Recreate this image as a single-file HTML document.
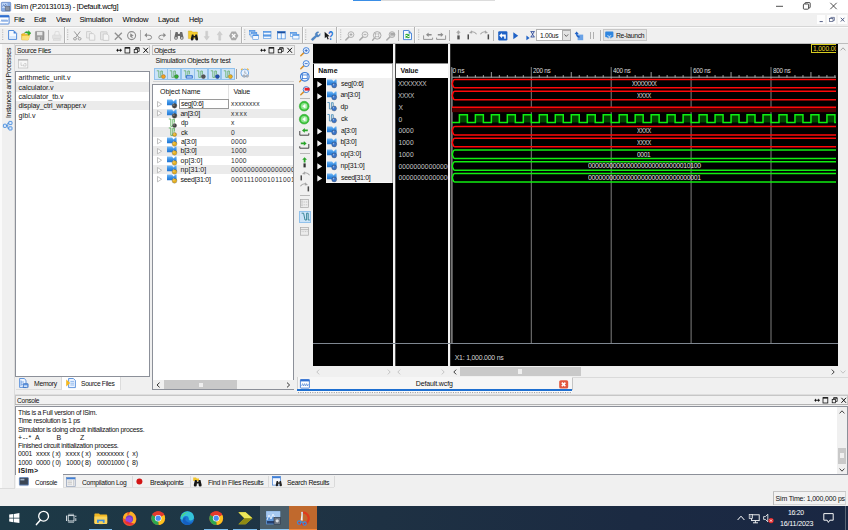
<!DOCTYPE html>
<html lang="en"><head><meta charset="utf-8"><title>ISim (P.20131013) - [Default.wcfg]</title>
<style>
html,body{margin:0;padding:0;background:#f0f0f0;}
#r{position:relative;width:848px;height:530px;overflow:hidden;background:#f0f0f0;font-family:"Liberation Sans",sans-serif;}
#r div,#r svg,#r span{position:absolute;}
#r svg{overflow:visible;}
.t{white-space:pre;line-height:1;}
</style></head>
<body><div id="r">
<svg width="0" height="0" style="left:0;top:0"><defs><linearGradient id="bg1" x1="0" y1="0" x2="0" y2="1"><stop offset="0" stop-color="#78baf4"/><stop offset="0.45" stop-color="#3f95e8"/><stop offset="1" stop-color="#1f74d2"/></linearGradient></defs></svg>
<div style="left:0px;top:0px;width:848px;height:13px;background:#ffffff;"></div>
<div style="left:353.4px;top:0px;width:28px;height:0.7px;background:#3a8ee6;"></div>
<div style="left:381.4px;top:0px;width:113.6px;height:0.6px;background:#dcdcdc;"></div>
<svg style="left:1px;top:1.5px;" width="10" height="10" viewBox="0 0 10 10">
<rect x="0.3" y="0.3" width="9.4" height="9" rx="0.8" fill="#86abe4" stroke="#5479b8" stroke-width="0.6"/>
<rect x="1.2" y="1.3" width="5.2" height="4.6" fill="#cfe2fa"/>
<rect x="4.2" y="4.3" width="4.6" height="4.2" fill="#8c95a4" stroke="#555f70" stroke-width="0.5"/>
<path d="M1.6 4.8 L2.6 2.6 L3.6 4.4 L4.6 2.2 L5.8 3.8" fill="none" stroke="#2c58a8" stroke-width="0.6"/>
</svg>
<span class="t" style="left:13.6px;top:3.30px;font-size:7.9px;color:#000;letter-spacing:-0.300px;transform-origin:0 0;transform:scaleX(0.9530);">ISim (P.20131013) - [Default.wcfg]</span>
<svg style="left:770px;top:0px;" width="78" height="13" viewBox="0 0 78 13">
<path d="M6 6.3 H13" stroke="#222" stroke-width="0.8" fill="none"/>
<rect x="33.4" y="4" width="5.2" height="5.2" rx="0.8" fill="none" stroke="#222" stroke-width="0.8"/>
<path d="M35 4 V3.2 Q35 2.6 35.6 2.6 H39.6 Q40.2 2.6 40.2 3.2 V7.2 Q40.2 7.8 39.6 7.8 H38.8" fill="none" stroke="#222" stroke-width="0.8"/>
<path d="M60.3 2.8 L66.7 9.2 M66.7 2.8 L60.3 9.2" stroke="#222" stroke-width="0.8" fill="none"/>
</svg>
<div style="left:0px;top:13px;width:848px;height:13.5px;background:#f0f0f0;"></div>
<svg style="left:0px;top:15px;" width="10" height="10" viewBox="0 0 10 10">
<rect x="-0.5" y="0.4" width="9.6" height="8.6" rx="0.8" fill="#fff" stroke="#2f6fd0" stroke-width="0.8"/>
<rect x="-0.5" y="0.4" width="9.6" height="2" fill="#2f6fd0"/>
<path d="M1 6.8 L2 4.6 L3 6.8 L4 4.6 L5 6.8 L6 4.6 L7 6.8 L8 4.6" fill="none" stroke="#2f6fd0" stroke-width="0.55"/>
</svg>
<span class="t" style="left:14.2px;top:16.30px;font-size:7.6px;color:#000;letter-spacing:-0.300px;transform-origin:0 0;transform:scaleX(0.9643);">File</span>
<span class="t" style="left:34.3px;top:16.30px;font-size:7.6px;color:#000;letter-spacing:-0.300px;transform-origin:0 0;transform:scaleX(0.9964);">Edit</span>
<span class="t" style="left:55.5px;top:16.30px;font-size:7.6px;color:#000;letter-spacing:-0.300px;transform-origin:0 0;transform:scaleX(0.9491);">View</span>
<span class="t" style="left:79.5px;top:16.30px;font-size:7.6px;color:#000;letter-spacing:-0.260px;">Simulation</span>
<span class="t" style="left:122.5px;top:16.30px;font-size:7.6px;color:#000;letter-spacing:-0.185px;">Window</span>
<span class="t" style="left:158px;top:16.30px;font-size:7.6px;color:#000;letter-spacing:-0.300px;transform-origin:0 0;transform:scaleX(0.9923);">Layout</span>
<span class="t" style="left:188.7px;top:16.30px;font-size:7.6px;color:#000;letter-spacing:-0.300px;transform-origin:0 0;transform:scaleX(0.9468);">Help</span>
<div style="left:816.5px;top:15px;width:8.6px;height:9.2px;background:#fdfdfd;"></div>
<div style="left:827.2px;top:15px;width:8.6px;height:9.2px;background:#fdfdfd;"></div>
<div style="left:838px;top:15px;width:8.6px;height:9.2px;background:#fdfdfd;"></div>
<svg style="left:816.5px;top:15px;" width="32" height="9.2" viewBox="0 0 32 9.2">
<path d="M2.6 6.6 H5.8" stroke="#44507a" stroke-width="0.9"/>
<rect x="12.6" y="3.6" width="3.4" height="3" fill="none" stroke="#44507a" stroke-width="0.7"/>
<path d="M13.8 3.6 V2.4 H17.4 V5.4 H16" fill="none" stroke="#44507a" stroke-width="0.7"/>
<path d="M23.8 2.8 L27.4 6.6 M27.4 2.8 L23.8 6.6" stroke="#44507a" stroke-width="0.9"/>
</svg>
<div style="left:0px;top:26px;width:848px;height:0.8px;background:#d6d6d6;"></div>
<div style="left:0px;top:26.8px;width:848px;height:0.7px;background:#fbfbfb;"></div>
<div style="left:0px;top:43px;width:848px;height:1px;background:#bdbdbd;"></div>
<svg style="left:2.3px;top:29px;" width="2" height="12" viewBox="0 0 2 12"><path d="M0.7 0.5 V12" stroke="#b4b4b4" stroke-width="1.1" stroke-dasharray="1 1.35" fill="none"/></svg>
<svg style="left:67.3px;top:29px;" width="2" height="12" viewBox="0 0 2 12"><path d="M0.7 0.5 V12" stroke="#b4b4b4" stroke-width="1.1" stroke-dasharray="1 1.35" fill="none"/></svg>
<svg style="left:244px;top:29px;" width="2" height="12" viewBox="0 0 2 12"><path d="M0.7 0.5 V12" stroke="#b4b4b4" stroke-width="1.1" stroke-dasharray="1 1.35" fill="none"/></svg>
<svg style="left:305.3px;top:29px;" width="2" height="12" viewBox="0 0 2 12"><path d="M0.7 0.5 V12" stroke="#b4b4b4" stroke-width="1.1" stroke-dasharray="1 1.35" fill="none"/></svg>
<svg style="left:339.8px;top:29px;" width="2" height="12" viewBox="0 0 2 12"><path d="M0.7 0.5 V12" stroke="#b4b4b4" stroke-width="1.1" stroke-dasharray="1 1.35" fill="none"/></svg>
<svg style="left:417.8px;top:29px;" width="2" height="12" viewBox="0 0 2 12"><path d="M0.7 0.5 V12" stroke="#b4b4b4" stroke-width="1.1" stroke-dasharray="1 1.35" fill="none"/></svg>
<div style="left:64.3px;top:27px;width:0.8px;height:16px;background:#b4b4b4;"></div>
<div style="left:65.1px;top:27px;width:0.9px;height:16px;background:#fafafa;"></div>
<div style="left:241.3px;top:27px;width:0.8px;height:16px;background:#b4b4b4;"></div>
<div style="left:242.10000000000002px;top:27px;width:0.9px;height:16px;background:#fafafa;"></div>
<div style="left:302.3px;top:27px;width:0.8px;height:16px;background:#b4b4b4;"></div>
<div style="left:303.1px;top:27px;width:0.9px;height:16px;background:#fafafa;"></div>
<div style="left:336.3px;top:27px;width:0.8px;height:16px;background:#b4b4b4;"></div>
<div style="left:337.1px;top:27px;width:0.9px;height:16px;background:#fafafa;"></div>
<div style="left:414.3px;top:27px;width:0.8px;height:16px;background:#b4b4b4;"></div>
<div style="left:415.1px;top:27px;width:0.9px;height:16px;background:#fafafa;"></div>
<div style="left:47.6px;top:29.5px;width:0.9px;height:11.5px;background:#b4b4b4;"></div>
<div style="left:140px;top:29.5px;width:0.9px;height:11.5px;background:#b4b4b4;"></div>
<div style="left:170.4px;top:29.5px;width:0.9px;height:11.5px;background:#b4b4b4;"></div>
<div style="left:398.4px;top:29.5px;width:0.9px;height:11.5px;background:#b4b4b4;"></div>
<div style="left:449.4px;top:29.5px;width:0.9px;height:11.5px;background:#b4b4b4;"></div>
<div style="left:493px;top:29.5px;width:0.9px;height:11.5px;background:#b4b4b4;"></div>
<div style="left:600.3px;top:29.5px;width:0.9px;height:11.5px;background:#b4b4b4;"></div>
<svg style="left:8px;top:30.3px;" width="10" height="10" viewBox="0 0 10 10"><path d="M0.6 0.5 H5.8 L8.6 3.3 V9.4 H0.6 Z" fill="#f4f9ff" stroke="#3f7fd6" stroke-width="0.9" stroke-linejoin="round"/>
<path d="M5.6 0.6 V3.5 H8.5 Z" fill="#3f7fd6"/><path d="M1.4 6 L7.8 6 7.8 8.8 1.4 8.8Z" fill="#cfe3fb" opacity="0.8"/></svg>
<svg style="left:21px;top:29.8px;" width="10.5" height="10.5" viewBox="0 0 10.5 10.5"><path d="M0.6 4 L3.6 3.4 L4.6 4.4 L8.8 4.6 L7.2 10 L0.8 9.8 Z" fill="#f2c02c" stroke="#c99712" stroke-width="0.5"/>
<path d="M1.2 6 L9.4 5.4 L7.4 10 L0.9 9.8 Z" fill="#fbe07a"/>
<path d="M3.4 2.8 Q5.6 0.6 7.4 2 L7.4 0.6 L10 3.2 L7.2 5.4 L7.3 3.8 Q5.4 2.6 3.4 2.8 Z" fill="#2fb12f" stroke="#1a861a" stroke-width="0.3"/></svg>
<svg style="left:35px;top:31px;" width="9.5" height="9.5" viewBox="0 0 9.5 9.5"><rect x="0.4" y="0.4" width="8.6" height="8.6" rx="0.6" fill="#9c9c9c" stroke="#8c8c8c" stroke-width="0.6"/>
<rect x="2" y="0.9" width="5.4" height="3.4" fill="#e6e6e6"/><rect x="2.6" y="5.8" width="4.2" height="3.2" fill="#c9c9c9"/><rect x="5.2" y="6.2" width="1.1" height="2.4" fill="#7d7d7d"/></svg>
<svg style="left:52px;top:30.8px;" width="10" height="10" viewBox="0 0 10 10"><path d="M2.6 4 L3.4 0.6 H6.8 L7.4 4" fill="#f2f2f2" stroke="#cfcfcf" stroke-width="0.6"/>
<rect x="0.5" y="4" width="8.6" height="3.8" rx="0.8" fill="#e2e2e2" stroke="#d2d2d2" stroke-width="0.5"/>
<path d="M1.8 7.8 H8 L8.6 9.4 H1.2 Z" fill="#e6e6e6" stroke="#cdcdcd" stroke-width="0.5"/></svg>
<svg style="left:73px;top:31px;" width="9" height="10" viewBox="0 0 9 10"><path d="M1.2 0.4 L6 6.6 M7.2 0.4 L2.6 6.6" stroke="#8e8e8e" stroke-width="0.9" fill="none"/>
<ellipse cx="2" cy="7.8" rx="1.5" ry="1.2" fill="none" stroke="#8e8e8e" stroke-width="0.8"/><ellipse cx="6.6" cy="7.8" rx="1.5" ry="1.2" fill="none" stroke="#8e8e8e" stroke-width="0.8"/></svg>
<svg style="left:86px;top:31px;" width="10" height="10" viewBox="0 0 10 10"><path d="M0.6 0.6 H4.4 L6 2.2 V7 H0.6 Z" fill="#ededed" stroke="#c2c2c2" stroke-width="0.7"/>
<path d="M3.4 2.6 H7.2 L8.8 4.2 V9.2 H3.4 Z" fill="#f3f3f3" stroke="#c2c2c2" stroke-width="0.7"/></svg>
<svg style="left:100px;top:31px;" width="10" height="10" viewBox="0 0 10 10"><rect x="0.5" y="0.8" width="6.6" height="8" rx="0.6" fill="#e6e6e6" stroke="#c4c4c4" stroke-width="0.7"/>
<path d="M3.2 3 H7 L8.8 4.6 V9.4 H3.2 Z" fill="#f5f5f5" stroke="#c2c2c2" stroke-width="0.7"/></svg>
<svg style="left:113.5px;top:31.6px;" width="9" height="9" viewBox="0 0 9 9"><path d="M0.8 0.8 L7.8 7.8 M7.8 0.8 L0.8 7.8" stroke="#909090" stroke-width="1.3" fill="none"/></svg>
<svg style="left:127px;top:31px;" width="10" height="10" viewBox="0 0 10 10"><circle cx="4.6" cy="4.6" r="4" fill="#f0f0f0" stroke="#8e8e8e" stroke-width="1.1"/>
<path d="M3.4 2.2 L6.8 4.8 L5 5 L5.8 7 L4.8 7.3 L4 5.4 L3 6.2 Z" fill="#8a8a8a"/></svg>
<svg style="left:144px;top:31.5px;" width="9" height="8" viewBox="0 0 9 8"><path d="M1.2 3.2 H5 Q7.6 3.2 7.6 5.4 Q7.6 7.4 5 7.4 H3.6" fill="none" stroke="#8c8c8c" stroke-width="1"/><path d="M0.4 3.2 L3 0.8 V5.6 Z" fill="#8c8c8c"/></svg>
<svg style="left:158px;top:31.5px;" width="9" height="8" viewBox="0 0 9 8"><path d="M7.2 3.2 H3.4 Q0.8 3.2 0.8 5.4 Q0.8 7.4 3.4 7.4 H4.8" fill="none" stroke="#8c8c8c" stroke-width="1"/><path d="M8 3.2 L5.4 0.8 V5.6 Z" fill="#8c8c8c"/></svg>
<svg style="left:174px;top:31px;" width="10" height="10" viewBox="0 0 10 10"><path d="M1.6 1 H3.6 L4.2 3 H5.6 L6.2 1 H8.2 L9.6 6.8 Q9.8 8.8 7.8 8.8 Q6 8.8 6 7 V5 H3.8 V7 Q3.8 8.8 2 8.8 Q0 8.8 0.2 6.8 Z" fill="#6a6a6a"/><circle cx="2" cy="7" r="0.9" fill="#d0d0d0"/><circle cx="7.8" cy="7" r="0.9" fill="#d0d0d0"/></svg>
<svg style="left:188px;top:30px;" width="11" height="11" viewBox="0 0 11 11"><path d="M0.4 1 H3.6 L4.6 2 H9.4 V8.6 H0.4 Z" fill="#f6cd2f" stroke="#d0a010" stroke-width="0.4"/>
<g transform="translate(2.6,3.6) scale(0.78)"><path d="M1.6 1 H3.6 L4.2 3 H5.6 L6.2 1 H8.2 L9.6 6.8 Q9.8 8.8 7.8 8.8 Q6 8.8 6 7 V5 H3.8 V7 Q3.8 8.8 2 8.8 Q0 8.8 0.2 6.8 Z" fill="#1c1c1c"/></g></svg>
<svg style="left:203.5px;top:31px;" width="5.4" height="9.5" viewBox="0 0 5.4 9.5"><path d="M1.7 0.2 H3.7 V5.6 H5.3 L2.7 9.2 L0.1 5.6 H1.7 Z" fill="#cfcfcf" stroke="#bcbcbc" stroke-width="0.3"/></svg>
<svg style="left:217px;top:31px;" width="5.4" height="9.5" viewBox="0 0 5.4 9.5"><path d="M1.7 9.2 H3.7 V3.8 H5.3 L2.7 0.2 L0.1 3.8 H1.7 Z" fill="#cfcfcf" stroke="#bcbcbc" stroke-width="0.3"/></svg>
<svg style="left:228.5px;top:30.5px;" width="10" height="10" viewBox="0 0 10 10"><path d="M2.6 0.4 H6.8 L9.4 4.8 L6.8 9.2 H2.6 L0.1 4.8 Z" fill="#a9a9a9"/><path d="M3 3 L6.4 6.6 M6.4 3 L3 6.6" stroke="#fff" stroke-width="1.2"/></svg>
<svg style="left:249px;top:30.3px;" width="10.5" height="10.5" viewBox="0 0 10.5 10.5"><rect x="0.4" y="0.5" width="5.6" height="4.4" fill="#f2f8ff" stroke="#3b86de" stroke-width="0.55"/><rect x="0.4" y="0.5" width="5.6" height="1.1" fill="#3b86de"/><rect x="2" y="2.6" width="5.8" height="4.4" fill="#f2f8ff" stroke="#3b86de" stroke-width="0.55"/><rect x="2" y="2.6" width="5.8" height="1.1" fill="#3b86de"/><rect x="3.8" y="4.8" width="5.8" height="4.6" fill="#f2f8ff" stroke="#3b86de" stroke-width="0.55"/><rect x="3.8" y="4.8" width="5.8" height="1.1" fill="#3b86de"/></svg>
<svg style="left:263.3px;top:31.2px;" width="9" height="8.5" viewBox="0 0 9 8.5"><rect x="0.4" y="0.5" width="7.6" height="3.3" fill="#f2f8ff" stroke="#3b86de" stroke-width="0.55"/><rect x="0.4" y="0.5" width="7.6" height="1.1" fill="#3b86de"/><rect x="0.4" y="4.4" width="7.6" height="3.3" fill="#f2f8ff" stroke="#3b86de" stroke-width="0.55"/><rect x="0.4" y="4.4" width="7.6" height="1.1" fill="#3b86de"/></svg>
<svg style="left:277px;top:31.2px;" width="9" height="8.5" viewBox="0 0 9 8.5"><rect x="0.4" y="0.5" width="7.8" height="7.4" fill="#f2f8ff" stroke="#3b86de" stroke-width="0.7"/><rect x="0.4" y="0.5" width="7.8" height="1.8" fill="#1d4f9e"/><path d="M4.3 2 V8" stroke="#3b86de" stroke-width="0.7"/></svg>
<svg style="left:290px;top:31.6px;" width="10" height="8" viewBox="0 0 10 8"><rect x="0.4" y="0.5" width="6.2" height="4.2" fill="#f2f8ff" stroke="#3b86de" stroke-width="0.55"/><rect x="0.4" y="0.5" width="6.2" height="1.1" fill="#3b86de"/><rect x="2.8" y="2.6" width="6.2" height="4.4" fill="#f2f8ff" stroke="#3b86de" stroke-width="0.55"/><rect x="2.8" y="2.6" width="6.2" height="1.1" fill="#3b86de"/></svg>
<svg style="left:310.5px;top:30.8px;" width="10" height="10" viewBox="0 0 10 10"><path d="M9.2 2.6 Q9.6 4.6 8 5.6 Q6.8 6.2 5.8 5.8 L2.2 9.2 Q1.2 9.8 0.6 9 Q0 8.2 0.8 7.6 L4.4 4.4 Q3.8 2.6 5.2 1.4 Q6.4 0.4 8 1 L6.2 2.6 L6.6 3.8 L7.8 4.2 Z" fill="#4c86c8" stroke="#2d5f9e" stroke-width="0.3"/></svg>
<svg style="left:323.5px;top:30.8px;" width="11" height="10" viewBox="0 0 11 10"><path d="M0.6 0.8 L0.8 7.2 L2.4 5.8 L3.6 8.6 L4.8 8.1 L3.6 5.4 L5.6 5.2 Z" fill="#1a1a1a"/></svg>
<span class="t" style="left:328.0px;top:29.80px;font-size:12.2px;color:#1e6fd6;font-weight:bold;transform-origin:0 0;transform:scaleX(0.7200);">?</span>
<svg style="left:345px;top:31px;" width="10" height="10" viewBox="0 0 10 10"><path d="M4.2 5.6 L0.8 9" stroke="#a9a9a9" stroke-width="1.5" stroke-linecap="round"/><circle cx="6" cy="3.6" r="2.9" fill="#ececec" stroke="#a3a3a3" stroke-width="0.8"/><path d="M4.6 3.6 H7.4 M6 2.2 V5" stroke="#9a9a9a" stroke-width="0.7"/></svg>
<svg style="left:358.5px;top:31px;" width="10" height="10" viewBox="0 0 10 10"><path d="M4.2 5.6 L0.8 9" stroke="#a9a9a9" stroke-width="1.5" stroke-linecap="round"/><circle cx="6" cy="3.6" r="2.9" fill="#ececec" stroke="#a3a3a3" stroke-width="0.8"/><path d="M4.6 3.6 H7.4" stroke="#9a9a9a" stroke-width="0.7"/></svg>
<svg style="left:372px;top:30.6px;" width="10" height="10" viewBox="0 0 10 10"><path d="M2.8 6.6 L0.6 9.2" stroke="#a9a9a9" stroke-width="1.4" stroke-linecap="round"/><circle cx="5.2" cy="4.4" r="3.8" fill="#ececec" stroke="#a3a3a3" stroke-width="0.9"/><path d="M2.6 1.8 L7.8 7 M7.8 1.8 L2.6 7" stroke="#a3a3a3" stroke-width="0.8"/><rect x="3.6" y="3" width="3.2" height="2.8" fill="#f4f4f4" stroke="#a3a3a3" stroke-width="0.5"/></svg>
<svg style="left:385.5px;top:31px;" width="10" height="10" viewBox="0 0 10 10"><path d="M4.2 5.6 L0.8 9" stroke="#a9a9a9" stroke-width="1.5" stroke-linecap="round"/><circle cx="6" cy="3.6" r="2.9" fill="#dcdcdc" stroke="#a3a3a3" stroke-width="0.8"/><rect x="4.4" y="2" width="4.6" height="2.6" fill="#a9a9a9"/></svg>
<svg style="left:402.8px;top:30.3px;" width="9.5" height="10.5" viewBox="0 0 9.5 10.5"><path d="M0.5 0.5 H5.8 L8.5 3.2 V9.6 H0.5 Z" fill="#f6faff" stroke="#3f7fd6" stroke-width="0.9" stroke-linejoin="round"/><path d="M5.6 0.6 V3.4 H8.4 Z" fill="#3f7fd6"/>
<path d="M2 5 Q3.6 3 5.6 4.4 L6.4 3.6 V6 H4 L4.9 5.1 Q3.6 4.4 2.8 5.6 Z" fill="#27a527"/><path d="M7 7 Q5.4 9 3.4 7.6 L2.6 8.4 V6 H5 L4.1 6.9 Q5.4 7.6 6.2 6.4 Z" fill="#27a527"/></svg>
<svg style="left:423px;top:31.6px;" width="11" height="9" viewBox="0 0 11 9"><path d="M0.6 3.4 V7.4 H9.6 V5.6" fill="none" stroke="#8c8c8c" stroke-width="0.9"/><path d="M3 2.8 L5.6 0.6 V2 H8.6 V3.6 H5.6 V5 Z" fill="#8c8c8c"/></svg>
<svg style="left:436px;top:31.6px;" width="11" height="9" viewBox="0 0 11 9"><path d="M0.6 5.6 V7.4 H9.6 V3.4" fill="none" stroke="#8c8c8c" stroke-width="0.9"/><path d="M7.4 2.8 L4.8 0.6 V2 H1.8 V3.6 H4.8 V5 Z" fill="#8c8c8c"/></svg>
<svg style="left:455.6px;top:30.4px;" width="5" height="11" viewBox="0 0 5 11"><path d="M2.4 0.2 L4.7 2.8 H3.3 V4.6 H1.5 V2.8 H0.1 Z" fill="#a8a8a8"/><rect x="1.3" y="5.4" width="2.4" height="4" fill="#555"/></svg>
<svg style="left:467px;top:30.4px;" width="11" height="10" viewBox="0 0 11 10"><path d="M9.6 4.2 Q7.6 1.2 4.2 1.8" fill="none" stroke="#a6a6a6" stroke-width="1.1"/><path d="M2 3 L5 0.2 L5.2 3.6 Z" fill="#a6a6a6"/><rect x="0.5" y="4.4" width="1.5" height="5" fill="#4a4a4a"/></svg>
<svg style="left:480.3px;top:30.4px;" width="11" height="10" viewBox="0 0 11 10"><path d="M0.4 4.2 Q2.4 1.2 5.8 1.8" fill="none" stroke="#a6a6a6" stroke-width="1.1"/><path d="M8 3 L5 0.2 L4.8 3.6 Z" fill="#a6a6a6"/><rect x="7.6" y="4.4" width="1.5" height="5" fill="#4a4a4a"/></svg>
<svg style="left:498px;top:30.8px;" width="10" height="10" viewBox="0 0 10 10"><rect x="0.2" y="0.2" width="9.2" height="9.2" rx="1.2" fill="#1f62c6"/><path d="M1.2 4.6 L4 2 V3.6 H7.8 V7.8 H6.2 V5.6 H4 V7.2 Z" fill="#fff"/></svg>
<svg style="left:513.4px;top:31.8px;" width="6" height="8" viewBox="0 0 6 8"><path d="M0.3 0.2 L5.2 3.7 L0.3 7.2 Z" fill="#1f62c6"/></svg>
<svg style="left:525.5px;top:30.6px;" width="10" height="10" viewBox="0 0 10 10"><path d="M0.4 4.6 L3.6 6.9 L0.4 9.2 Z" fill="#1f62c6"/><path d="M4.6 0.6 H8.6 M4.6 6 H8.6 M5 0.6 L8.2 6 M8.2 0.6 L5 6" stroke="#1f3f96" stroke-width="0.8" fill="none"/></svg>
<div style="left:536.3px;top:29.3px;width:35px;height:12px;background:#fff;border:0.8px solid #b2b2b2;box-sizing:border-box;"></div>
<div style="left:562px;top:30px;width:8.6px;height:10.6px;background:#e4e4e4;border:0.6px solid #adadad;box-sizing:border-box;"></div>
<svg style="left:562px;top:30px;" width="8.6" height="10.6" viewBox="0 0 8.6 10.6"><path d="M2.4 4.4 L4.3 6.4 L6.2 4.4" fill="none" stroke="#444" stroke-width="0.8"/></svg>
<span class="t" style="left:540px;top:32.20px;font-size:7.0px;color:#111;letter-spacing:-0.300px;transform-origin:0 0;transform:scaleX(0.9545);">1.00us</span>
<svg style="left:574px;top:31px;" width="10" height="10" viewBox="0 0 10 10"><rect x="3.6" y="3.6" width="5.6" height="5.6" fill="#6aa2e6"/><path d="M2.6 0.4 L0.6 3 L2 3.2 Q2.2 6.6 5.6 6.8 V5.2 Q3.6 5.2 3.4 3.2 L4.8 3 Z" fill="#1f62c6"/></svg>
<div style="left:590px;top:32px;width:1.3px;height:7.4px;background:#b0b0b0;"></div>
<div style="left:593px;top:32px;width:1.3px;height:7.4px;background:#b0b0b0;"></div>
<div style="left:603.3px;top:29px;width:43.4px;height:12.4px;background:#e6e6e6;border:0.8px solid #c8c8c8;box-sizing:border-box;"></div>
<svg style="left:605.3px;top:31.2px;" width="9" height="8.5" viewBox="0 0 9 8.5"><path d="M1 0.6 H7.6 Q8.4 0.6 8.4 1.4 V5.4 Q8.4 6.2 7.6 6.2 H6.8 L5.8 7.8 L5.4 6.2 H3.6 L3.2 7.8 L2.2 6.2 H1 Q0.2 6.2 0.2 5.4 V1.4 Q0.2 0.6 1 0.6Z" fill="#2f86e0"/><path d="M2.4 4.6 Q4.4 6.4 6.2 4.6" stroke="#fff" stroke-width="0.8" fill="none"/></svg>
<span class="t" style="left:615.5px;top:32.00px;font-size:7.0px;color:#111;letter-spacing:-0.300px;transform-origin:0 0;transform:scaleX(0.9703);">Re-launch</span>
<div style="left:0px;top:44px;width:1.6px;height:444px;background:#fafafa;"></div>
<div style="left:14.4px;top:44px;width:0.8px;height:444px;background:#dcdcdc;"></div>
<div style="left:0px;top:488px;width:15px;height:0.8px;background:#dcdcdc;"></div>
<span class="t" style="left:5.07px;top:118.2px;font-size:7.0px;color:#111;transform-origin:0 0;transform:rotate(-90deg) scaleX(0.9822);letter-spacing:-0.300px;">Instances and Processes</span>
<svg style="left:2.6px;top:120.6px;" width="10" height="10" viewBox="0 0 10 10"><rect x="0.4" y="3.2" width="3" height="3.2" rx="0.6" fill="#dcecff" stroke="#2d7cd8" stroke-width="0.8"/>
<rect x="5.8" y="0.4" width="3.2" height="3.2" rx="0.6" fill="#dcecff" stroke="#2d7cd8" stroke-width="0.8"/>
<rect x="5.8" y="5.8" width="3.2" height="3.2" rx="0.6" fill="#dcecff" stroke="#2d7cd8" stroke-width="0.8"/>
<path d="M3.4 4.8 H4.8 M4.8 2 V7.4 M4.8 2 H5.8 M4.8 7.4 H5.8" stroke="#2d7cd8" stroke-width="0.7" fill="none"/></svg>
<div style="left:15px;top:44.6px;width:135.2px;height:10.6px;background:#f1f1f1;border:0.8px solid #c6c6c6;box-sizing:border-box;"></div>
<div style="left:15px;top:54.400000000000006px;width:135.2px;height:0.8px;background:#b9b9b9;"></div>
<span class="t" style="left:17px;top:46.80px;font-size:7.0px;color:#111;letter-spacing:-0.300px;transform-origin:0 0;transform:scaleX(0.9589);">Source Files</span>
<svg style="left:115.99999999999999px;top:46.800000000000004px;" width="34" height="7" viewBox="0 0 34 7"><path d="M0.2 3.2 L2 1.4 V2.7 H4.2 V1.4 L6 3.2 L4.2 5 V3.7 H2 V5 Z" fill="#111"/>
<rect x="9" y="0.6" width="4.8" height="5.4" fill="none" stroke="#111" stroke-width="0.8"/><path d="M9 1 H13.8" stroke="#111" stroke-width="1.2"/>
<rect x="18.2" y="2.4" width="3.4" height="3.4" fill="none" stroke="#111" stroke-width="0.75"/><path d="M19.6 2.2 V0.8 H23.2 V4.4 H21.8" fill="none" stroke="#111" stroke-width="0.75"/><path d="M19.6 1 H23.2" stroke="#111" stroke-width="1"/>
<path d="M27.4 0.8 L32 5.8 M32 0.8 L27.4 5.8" stroke="#111" stroke-width="1"/></svg>
<svg style="left:18px;top:59px;" width="10.5" height="10" viewBox="0 0 10.5 10"><rect x="0.4" y="0.6" width="9.4" height="8.4" fill="#f7f7f7" stroke="#bdbdbd" stroke-width="0.7"/><path d="M0.4 1 H9.8" stroke="#a8a8a8" stroke-width="1"/>
<path d="M3 3.4 V6.4 H4.6 M5.4 5.8 Q6.4 4.2 8 4.6 V7 H5.4 Z" fill="none" stroke="#b9b9b9" stroke-width="0.6"/></svg>
<div style="left:15px;top:71.4px;width:135px;height:305.4px;background:#fff;border:0.9px solid #8c9099;box-sizing:border-box;"></div>
<span class="t" style="left:18.5px;top:75.25px;font-size:7.1px;color:#151515;letter-spacing:0.021px;">arithmetic_unit.v</span>
<div style="left:16px;top:82.47px;width:133px;height:9.3px;background:#ebebeb;"></div>
<span class="t" style="left:18.5px;top:84.57px;font-size:7.1px;color:#151515;letter-spacing:-0.043px;">calculator.v</span>
<span class="t" style="left:18.5px;top:93.89px;font-size:7.1px;color:#151515;letter-spacing:-0.052px;">calculator_tb.v</span>
<div style="left:16px;top:101.11000000000001px;width:133px;height:9.3px;background:#ebebeb;"></div>
<span class="t" style="left:18.5px;top:103.21px;font-size:7.1px;color:#151515;letter-spacing:-0.125px;">display_ctrl_wrapper.v</span>
<span class="t" style="left:18.5px;top:112.53px;font-size:7.1px;color:#151515;letter-spacing:0.080px;">glbl.v</span>
<div style="left:15.6px;top:377px;width:46px;height:12.4px;background:#efefef;"></div>
<div style="left:61.4px;top:377px;width:0.7px;height:12.4px;background:#d9d9d9;"></div>
<div style="left:15.6px;top:389.2px;width:46px;height:0.7px;background:#dcdcdc;"></div>
<div style="left:62px;top:376.6px;width:58px;height:13px;background:#fff;"></div>
<div style="left:120px;top:377px;width:0.7px;height:12.6px;background:#dcdcdc;"></div>
<svg style="left:19px;top:378px;" width="10" height="10.5" viewBox="0 0 10 10.5"><path d="M0.6 0.5 H5.2 L7 2.3 V9.4 H0.6 Z" fill="#eef5ff" stroke="#3f7fd6" stroke-width="0.8"/><path d="M2 2.4 V8 M2 4 H5 M2 6.2 H5" stroke="#3f7fd6" stroke-width="0.6"/>
<rect x="4.2" y="5.6" width="5" height="4" rx="0.5" fill="#5e96e0" stroke="#2d62b4" stroke-width="0.5"/><rect x="5" y="7.4" width="3.2" height="1.4" fill="#e6f0ff"/></svg>
<span class="t" style="left:34px;top:380.10px;font-size:7.0px;color:#111;letter-spacing:-0.300px;transform-origin:0 0;transform:scaleX(0.9733);">Memory</span>
<svg style="left:66px;top:378px;" width="10.5" height="10.5" viewBox="0 0 10.5 10.5"><path d="M2.6 0.5 H7.4 L9.4 2.5 V9.6 H2.6 Z" fill="#eef5ff" stroke="#3f7fd6" stroke-width="0.8"/><path d="M4.4 3.4 H8 M4.4 5.2 H8 M4.4 7 H8" stroke="#6aa0e6" stroke-width="0.7"/>
<path d="M0.2 1.4 L4.2 5 L0.2 8.6 Z" fill="#f5b81f"/></svg>
<span class="t" style="left:81.4px;top:380.10px;font-size:7.0px;color:#111;letter-spacing:-0.300px;transform-origin:0 0;transform:scaleX(0.9476);">Source Files</span>
<div style="left:152.4px;top:44.6px;width:142.2px;height:10.6px;background:#f1f1f1;border:0.8px solid #c6c6c6;box-sizing:border-box;"></div>
<div style="left:152.4px;top:54.400000000000006px;width:142.2px;height:0.8px;background:#b9b9b9;"></div>
<span class="t" style="left:154.4px;top:46.80px;font-size:7.0px;color:#111;letter-spacing:-0.300px;transform-origin:0 0;transform:scaleX(0.9869);">Objects</span>
<svg style="left:260.40000000000003px;top:46.800000000000004px;" width="34" height="7" viewBox="0 0 34 7"><path d="M0.2 3.2 L2 1.4 V2.7 H4.2 V1.4 L6 3.2 L4.2 5 V3.7 H2 V5 Z" fill="#111"/>
<rect x="9" y="0.6" width="4.8" height="5.4" fill="none" stroke="#111" stroke-width="0.8"/><path d="M9 1 H13.8" stroke="#111" stroke-width="1.2"/>
<rect x="18.2" y="2.4" width="3.4" height="3.4" fill="none" stroke="#111" stroke-width="0.75"/><path d="M19.6 2.2 V0.8 H23.2 V4.4 H21.8" fill="none" stroke="#111" stroke-width="0.75"/><path d="M19.6 1 H23.2" stroke="#111" stroke-width="1"/>
<path d="M27.4 0.8 L32 5.8 M32 0.8 L27.4 5.8" stroke="#111" stroke-width="1"/></svg>
<span class="t" style="left:155.5px;top:57.10px;font-size:7.0px;color:#111;letter-spacing:-0.253px;">Simulation Objects for test</span>
<div style="left:153px;top:81px;width:141.4px;height:0.7px;background:#d2d2d2;"></div>
<div style="left:154.0px;top:67.8px;width:13.82px;height:11.8px;background:#cbe3f8;border:0.6px solid #92c2ec;box-sizing:border-box;"></div>
<svg style="left:156.0px;top:68.6px;" width="10" height="10.5" viewBox="0 0 10 10.5"><path d="M0.8 1.8 H2.8 V8.4 H4.8 V2 H6.4 V5.4" fill="none" stroke="#55a655" stroke-width="0.7"/><circle cx="7.4" cy="7.6" r="2.1" fill="#f0a020" stroke="#333" stroke-width="0.25"/></svg>
<div style="left:167.42px;top:67.8px;width:13.82px;height:11.8px;background:#cbe3f8;border:0.6px solid #92c2ec;box-sizing:border-box;"></div>
<svg style="left:169.42px;top:68.6px;" width="10" height="10.5" viewBox="0 0 10 10.5"><path d="M0.8 1.8 H2.8 V8.4 H4.8 V2 H6.4 V5.4" fill="none" stroke="#55a655" stroke-width="0.7"/><circle cx="7.4" cy="7.6" r="2.1" fill="#33aa33" stroke="#333" stroke-width="0.25"/></svg>
<div style="left:180.84px;top:67.8px;width:13.82px;height:11.8px;background:#cbe3f8;border:0.6px solid #92c2ec;box-sizing:border-box;"></div>
<svg style="left:182.84px;top:68.6px;" width="10" height="10.5" viewBox="0 0 10 10.5"><path d="M0.8 1.8 H2.8 V8.4 H4.8 V2 H6.4 V5.4" fill="none" stroke="#55a655" stroke-width="0.7"/><rect x="2.8" y="6.2" width="7" height="3.4" rx="0.6" fill="#2f6fd0"/><rect x="3.8" y="7.4" width="5" height="1.2" fill="#cfe0ff"/></svg>
<div style="left:194.26px;top:67.8px;width:13.82px;height:11.8px;background:#cbe3f8;border:0.6px solid #92c2ec;box-sizing:border-box;"></div>
<svg style="left:196.26px;top:68.6px;" width="10" height="10.5" viewBox="0 0 10 10.5"><path d="M0.8 1.8 H2.8 V8.4 H4.8 V2 H6.4 V5.4" fill="none" stroke="#55a655" stroke-width="0.7"/><circle cx="7.4" cy="7.6" r="2.1" fill="#555" stroke="#333" stroke-width="0.25"/></svg>
<div style="left:207.68px;top:67.8px;width:13.82px;height:11.8px;background:#cbe3f8;border:0.6px solid #92c2ec;box-sizing:border-box;"></div>
<svg style="left:209.68px;top:68.6px;" width="10" height="10.5" viewBox="0 0 10 10.5"><path d="M0.8 1.8 H2.8 V8.4 H4.8 V2 H6.4 V5.4" fill="none" stroke="#55a655" stroke-width="0.7"/><circle cx="7.4" cy="7.6" r="2.1" fill="#1f4fb0" stroke="#333" stroke-width="0.25"/></svg>
<div style="left:221.1px;top:67.8px;width:13.82px;height:11.8px;background:#cbe3f8;border:0.6px solid #92c2ec;box-sizing:border-box;"></div>
<svg style="left:223.1px;top:68.6px;" width="10" height="10.5" viewBox="0 0 10 10.5"><path d="M0.8 1.8 H2.8 V8.4 H4.8 V2 H6.4 V5.4" fill="none" stroke="#55a655" stroke-width="0.7"/><circle cx="7.4" cy="7.6" r="2.1" fill="#e8b020" stroke="#333" stroke-width="0.25"/></svg>
<div style="left:236.4px;top:69px;width:0.8px;height:10.4px;background:#9e9e9e;"></div>
<svg style="left:240.3px;top:68.4px;" width="11" height="11" viewBox="0 0 11 11"><circle cx="4.8" cy="5" r="3.9" fill="#eaf3ff" stroke="#6aa6e6" stroke-width="0.9"/><path d="M1 1.8 L2.6 0.6 M8.6 1.8 L7 0.6" stroke="#f0b030" stroke-width="1.1"/>
<path d="M4.8 2.6 V5.2 H6.6" stroke="#7a8694" stroke-width="0.6" fill="none"/><circle cx="4" cy="8" r="1.3" fill="#b9bec6" stroke="#868c96" stroke-width="0.4"/><circle cx="7.2" cy="8" r="1.3" fill="#b9bec6" stroke="#868c96" stroke-width="0.4"/></svg>
<div style="left:152.4px;top:83.6px;width:142px;height:306.4px;background:#fff;border:0.9px solid #8c9099;box-sizing:border-box;"></div>
<span class="t" style="left:160px;top:89.00px;font-size:7.1px;color:#151515;letter-spacing:-0.086px;">Object Name</span>
<span class="t" style="left:233.5px;top:89.00px;font-size:7.1px;color:#151515;letter-spacing:-0.228px;">Value</span>
<div style="left:228.4px;top:84.6px;width:0.8px;height:14px;background:#e2e2e2;"></div>
<div style="left:153.3px;top:108.60000000000001px;width:140.2px;height:9.4px;background:#ebebeb;"></div>
<div style="left:153.3px;top:127.39999999999999px;width:140.2px;height:9.4px;background:#ebebeb;"></div>
<div style="left:153.3px;top:146.2px;width:140.2px;height:9.4px;background:#ebebeb;"></div>
<div style="left:153.3px;top:165.0px;width:140.2px;height:9.4px;background:#ebebeb;"></div>
<div style="left:229.4px;top:98px;width:64px;height:90px;overflow:hidden;">
<span class="t" style="left:1.7px;top:3.30px;font-size:6.7px;color:#2e2e2e;letter-spacing:0.247px;">xxxxxxxx</span>
<span class="t" style="left:1.7px;top:12.70px;font-size:6.7px;color:#2e2e2e;letter-spacing:0.807px;">xxxx</span>
<span class="t" style="left:1.7px;top:22.10px;font-size:6.7px;color:#2e2e2e;">x</span>
<span class="t" style="left:1.7px;top:31.50px;font-size:6.7px;color:#2e2e2e;">0</span>
<span class="t" style="left:1.7px;top:40.90px;font-size:6.7px;color:#2e2e2e;letter-spacing:0.203px;">0000</span>
<span class="t" style="left:1.7px;top:50.30px;font-size:6.7px;color:#2e2e2e;letter-spacing:0.203px;">1000</span>
<span class="t" style="left:1.7px;top:59.70px;font-size:6.7px;color:#2e2e2e;letter-spacing:0.203px;">1000</span>
<span class="t" style="left:1.7px;top:69.10px;font-size:6.7px;color:#2e2e2e;letter-spacing:0.272px;">00000000000000000000000000010100</span>
<span class="t" style="left:1.7px;top:78.50px;font-size:6.7px;color:#2e2e2e;letter-spacing:0.383px;">00011100010110011010001011011101</span>
</div>
<svg style="left:156.8px;top:100.8px;" width="5.4" height="6.6" viewBox="0 0 5.4 6.6"><path d="M0.5 0.5 L4.6 3.2 L0.5 5.9 Z" fill="#fff" stroke="#a6a6a6" stroke-width="0.7"/></svg>
<svg style="left:167px;top:99.1px;" width="10.4" height="10.4" viewBox="0 0 10.4 10.4"><path d="M0 0.6 H5 L6.6 2.6 L8.3 0.4 H9.6 V6.2 H8.3 L6.6 4.1 L5 6.2 H0 Z" fill="url(#bg1)"/><circle cx="7.5" cy="6.8" r="2.4" fill="#444" stroke="#3a3a3a" stroke-width="0.3"/><circle cx="6.9" cy="6.1" r="0.7" fill="#fff" opacity="0.55"/></svg>
<div style="left:178.6px;top:99px;width:50px;height:9.6px;background:#fff;border:0.8px solid #9a9a9a;box-sizing:border-box;"></div>
<span class="t" style="left:180.5px;top:100.30px;font-size:7.0px;color:#111;letter-spacing:-0.300px;transform-origin:0 0;transform:scaleX(0.9924);">seg[0:6]</span>
<svg style="left:156.8px;top:110.2px;" width="5.4" height="6.6" viewBox="0 0 5.4 6.6"><path d="M0.5 0.5 L4.6 3.2 L0.5 5.9 Z" fill="#fff" stroke="#a6a6a6" stroke-width="0.7"/></svg>
<svg style="left:167px;top:108.5px;" width="10.4" height="10.4" viewBox="0 0 10.4 10.4"><path d="M0 0.6 H5 L6.6 2.6 L8.3 0.4 H9.6 V6.2 H8.3 L6.6 4.1 L5 6.2 H0 Z" fill="url(#bg1)"/><circle cx="7.5" cy="6.8" r="2.4" fill="#444" stroke="#3a3a3a" stroke-width="0.3"/><circle cx="6.9" cy="6.1" r="0.7" fill="#fff" opacity="0.55"/></svg>
<span class="t" style="left:180.5px;top:109.70px;font-size:7.0px;color:#111;letter-spacing:-0.296px;">an[3:0]</span>
<svg style="left:167.6px;top:118.0px;" width="10" height="10.2" viewBox="0 0 10 10.2"><path d="M0.8 1 H2.8 V8.4 H4.8 V1.2 H6.4 V4.6" fill="none" stroke="#4aa84a" stroke-width="0.8"/><circle cx="6.6" cy="7.6" r="2.0" fill="#444" stroke="#3a3a3a" stroke-width="0.3"/><circle cx="6.0" cy="6.8999999999999995" r="0.7" fill="#fff" opacity="0.55"/></svg>
<span class="t" style="left:180.5px;top:119.10px;font-size:7.0px;color:#111;letter-spacing:-0.300px;transform-origin:0 0;transform:scaleX(0.9528);">dp</span>
<svg style="left:167.6px;top:127.39999999999999px;" width="10" height="10.2" viewBox="0 0 10 10.2"><path d="M0.8 1 H2.8 V8.4 H4.8 V1.2 H6.4 V4.6" fill="none" stroke="#4aa84a" stroke-width="0.8"/><circle cx="6.6" cy="7.6" r="2.0" fill="#e6b020" stroke="#3a3a3a" stroke-width="0.3"/><circle cx="6.0" cy="6.8999999999999995" r="0.7" fill="#fff" opacity="0.55"/></svg>
<span class="t" style="left:180.5px;top:128.50px;font-size:7.0px;color:#111;letter-spacing:-0.300px;transform-origin:0 0;transform:scaleX(0.9924);">ck</span>
<svg style="left:156.8px;top:138.4px;" width="5.4" height="6.6" viewBox="0 0 5.4 6.6"><path d="M0.5 0.5 L4.6 3.2 L0.5 5.9 Z" fill="#fff" stroke="#a6a6a6" stroke-width="0.7"/></svg>
<svg style="left:167px;top:136.7px;" width="10.4" height="10.4" viewBox="0 0 10.4 10.4"><path d="M0 0.6 H5 L6.6 2.6 L8.3 0.4 H9.6 V6.2 H8.3 L6.6 4.1 L5 6.2 H0 Z" fill="url(#bg1)"/><circle cx="7.5" cy="6.8" r="2.4" fill="#e6b020" stroke="#3a3a3a" stroke-width="0.3"/><circle cx="6.9" cy="6.1" r="0.7" fill="#fff" opacity="0.55"/></svg>
<span class="t" style="left:180.5px;top:137.90px;font-size:7.0px;color:#111;letter-spacing:-0.300px;transform-origin:0 0;transform:scaleX(0.9833);">a[3:0]</span>
<svg style="left:156.8px;top:147.8px;" width="5.4" height="6.6" viewBox="0 0 5.4 6.6"><path d="M0.5 0.5 L4.6 3.2 L0.5 5.9 Z" fill="#fff" stroke="#a6a6a6" stroke-width="0.7"/></svg>
<svg style="left:167px;top:146.1px;" width="10.4" height="10.4" viewBox="0 0 10.4 10.4"><path d="M0 0.6 H5 L6.6 2.6 L8.3 0.4 H9.6 V6.2 H8.3 L6.6 4.1 L5 6.2 H0 Z" fill="url(#bg1)"/><circle cx="7.5" cy="6.8" r="2.4" fill="#e6b020" stroke="#3a3a3a" stroke-width="0.3"/><circle cx="6.9" cy="6.1" r="0.7" fill="#fff" opacity="0.55"/></svg>
<span class="t" style="left:180.5px;top:147.30px;font-size:7.0px;color:#111;letter-spacing:-0.239px;">b[3:0]</span>
<svg style="left:156.8px;top:157.20000000000002px;" width="5.4" height="6.6" viewBox="0 0 5.4 6.6"><path d="M0.5 0.5 L4.6 3.2 L0.5 5.9 Z" fill="#fff" stroke="#a6a6a6" stroke-width="0.7"/></svg>
<svg style="left:167px;top:155.5px;" width="10.4" height="10.4" viewBox="0 0 10.4 10.4"><path d="M0 0.6 H5 L6.6 2.6 L8.3 0.4 H9.6 V6.2 H8.3 L6.6 4.1 L5 6.2 H0 Z" fill="url(#bg1)"/><circle cx="7.5" cy="6.8" r="2.4" fill="#e6b020" stroke="#3a3a3a" stroke-width="0.3"/><circle cx="6.9" cy="6.1" r="0.7" fill="#fff" opacity="0.55"/></svg>
<span class="t" style="left:180.5px;top:156.70px;font-size:7.0px;color:#111;letter-spacing:0.089px;">op[3:0]</span>
<svg style="left:156.8px;top:166.60000000000002px;" width="5.4" height="6.6" viewBox="0 0 5.4 6.6"><path d="M0.5 0.5 L4.6 3.2 L0.5 5.9 Z" fill="#fff" stroke="#a6a6a6" stroke-width="0.7"/></svg>
<svg style="left:167px;top:164.9px;" width="10.4" height="10.4" viewBox="0 0 10.4 10.4"><path d="M0 0.6 H5 L6.6 2.6 L8.3 0.4 H9.6 V6.2 H8.3 L6.6 4.1 L5 6.2 H0 Z" fill="url(#bg1)"/><circle cx="7.5" cy="6.8" r="2.4" fill="#e6b020" stroke="#3a3a3a" stroke-width="0.3"/><circle cx="6.9" cy="6.1" r="0.7" fill="#fff" opacity="0.55"/></svg>
<span class="t" style="left:180.5px;top:166.10px;font-size:7.0px;color:#111;letter-spacing:0.065px;">np[31:0]</span>
<svg style="left:156.8px;top:176.0px;" width="5.4" height="6.6" viewBox="0 0 5.4 6.6"><path d="M0.5 0.5 L4.6 3.2 L0.5 5.9 Z" fill="#fff" stroke="#a6a6a6" stroke-width="0.7"/></svg>
<svg style="left:167px;top:174.29999999999998px;" width="10.4" height="10.4" viewBox="0 0 10.4 10.4"><path d="M0 0.6 H5 L6.6 2.6 L8.3 0.4 H9.6 V6.2 H8.3 L6.6 4.1 L5 6.2 H0 Z" fill="url(#bg1)"/><circle cx="7.5" cy="6.8" r="2.4" fill="#e6b020" stroke="#3a3a3a" stroke-width="0.3"/><circle cx="6.9" cy="6.1" r="0.7" fill="#fff" opacity="0.55"/></svg>
<span class="t" style="left:180.5px;top:175.50px;font-size:7.0px;color:#111;letter-spacing:-0.263px;">seed[31:0]</span>
<div style="left:153.2px;top:380.4px;width:140.4px;height:9px;background:#f0f0f0;"></div>
<div style="left:164px;top:380.4px;width:73px;height:9px;background:#c9c9c9;"></div>
<div style="left:199px;top:382.6px;width:4.4px;height:4.4px;background:#eeeeee;"></div>
<svg style="left:155.5px;top:382px;" width="5" height="6" viewBox="0 0 5 6"><path d="M3.6 0.6 L1 3 L3.6 5.4" fill="none" stroke="#333" stroke-width="1"/></svg>
<svg style="left:285.6px;top:382px;" width="5" height="6" viewBox="0 0 5 6"><path d="M1 0.6 L3.6 3 L1 5.4" fill="none" stroke="#333" stroke-width="1"/></svg>
<div style="left:297.4px;top:44px;width:15.2px;height:332.4px;background:#f0f0f0;"></div>
<svg style="left:299.6px;top:46.6px;" width="11" height="10" viewBox="0 0 11 10"><path d="M4 5.6 L0.8 8.8" stroke="#d9902a" stroke-width="1.5" stroke-linecap="round"/><circle cx="6.2" cy="3.6" r="3" fill="#e6f1ff" stroke="#3a7ad6" stroke-width="0.9"/><path d="M4.7 3.6 H7.7 M6.2 2.1 V5.1" stroke="#2a5fc0" stroke-width="0.8"/></svg>
<svg style="left:299.6px;top:59.6px;" width="11" height="10" viewBox="0 0 11 10"><path d="M4 5.6 L0.8 8.8" stroke="#d9902a" stroke-width="1.5" stroke-linecap="round"/><circle cx="6.2" cy="3.6" r="3" fill="#e6f1ff" stroke="#3a7ad6" stroke-width="0.9"/><path d="M4.7 3.6 H7.7" stroke="#2a5fc0" stroke-width="0.8"/></svg>
<svg style="left:299.4px;top:72px;" width="11.5" height="11" viewBox="0 0 11.5 11"><path d="M2.6 7.4 L0.8 9.6" stroke="#d9902a" stroke-width="1.5" stroke-linecap="round"/><circle cx="5.8" cy="4.8" r="4.3" fill="#e6f1ff" stroke="#3a7ad6" stroke-width="1.1"/><rect x="3.4" y="3" width="4.8" height="3.6" fill="#fff" stroke="#3a7ad6" stroke-width="0.8"/><path d="M2.6 1.8 L3.6 3 M9 1.8 L8 3 M2.6 7.8 L3.6 6.6 M9 7.8 L8 6.6" stroke="#3a7ad6" stroke-width="0.8"/></svg>
<svg style="left:299.6px;top:85.6px;" width="11" height="10" viewBox="0 0 11 10"><path d="M4 5.6 L0.8 8.8" stroke="#d9902a" stroke-width="1.5" stroke-linecap="round"/><circle cx="6.2" cy="3.6" r="3" fill="#e6f1ff" stroke="#3a7ad6" stroke-width="0.9"/><rect x="4.6" y="1.8" width="5" height="2.8" fill="#e8202a"/></svg>
<div style="left:299.6px;top:98px;width:10.6px;height:0.8px;background:#b8b8b8;"></div>
<svg style="left:299.1px;top:101.1px;" width="10.6" height="10.6" viewBox="0 0 10.6 10.6"><circle cx="5.2" cy="5.2" r="4.9" fill="#38c238" stroke="#2aa02a" stroke-width="0.5"/><circle cx="5.2" cy="5.2" r="3.3" fill="#8fe48f"/><path d="M3.6 5.2 L6 3.4 V7 Z M6.9 3.4 V7" fill="#fff" stroke="#fff" stroke-width="0.6"/></svg>
<svg style="left:299.1px;top:113.8px;" width="10.6" height="10.6" viewBox="0 0 10.6 10.6"><circle cx="5.2" cy="5.2" r="4.9" fill="#38c238" stroke="#2aa02a" stroke-width="0.5"/><circle cx="5.2" cy="5.2" r="3.3" fill="#8fe48f"/><path d="M3.6 5.2 L6 3.4 V7 Z M6.9 3.4 V7" fill="#fff" stroke="#fff" stroke-width="0.6"/></svg>
<svg style="left:299.4px;top:127px;" width="11" height="10" viewBox="0 0 11 10"><path d="M0.8 4 V8.2 H9.8 V6.2" fill="none" stroke="#333" stroke-width="0.9"/><path d="M3 3.4 L5.8 1 V2.6 H8.8 V4.2 H5.8 V5.8 Z" fill="#2aa52a"/></svg>
<svg style="left:299.4px;top:140.4px;" width="11" height="10" viewBox="0 0 11 10"><path d="M0.8 6.2 V8.2 H9.8 V4" fill="none" stroke="#333" stroke-width="0.9"/><path d="M7.6 3.4 L4.8 1 V2.6 H1.8 V4.2 H4.8 V5.8 Z" fill="#2aa52a"/></svg>
<div style="left:299.6px;top:153px;width:10.6px;height:0.8px;background:#b8b8b8;"></div>
<svg style="left:302.2px;top:157.4px;" width="5.4" height="11" viewBox="0 0 5.4 11"><path d="M2.6 0.2 L5 2.8 H3.5 V5.4 H1.7 V2.8 H0.2 Z" fill="#2aa52a"/><rect x="1.5" y="6.4" width="2.2" height="4" fill="#333"/></svg>
<svg style="left:299.6px;top:170.8px;" width="11" height="10" viewBox="0 0 11 10"><path d="M9.6 4.2 Q7.6 1.2 4.2 1.8" fill="none" stroke="#a6a6a6" stroke-width="1.1"/><path d="M2 3 L5 0.2 L5.2 3.6 Z" fill="#a6a6a6"/><rect x="0.5" y="4.4" width="1.5" height="5" fill="#4a4a4a"/></svg>
<svg style="left:300.4px;top:182.2px;" width="11" height="10" viewBox="0 0 11 10"><path d="M0.4 4.2 Q2.4 1.2 5.8 1.8" fill="none" stroke="#a6a6a6" stroke-width="1.1"/><path d="M8 3 L5 0.2 L4.8 3.6 Z" fill="#a6a6a6"/><rect x="7.6" y="4.4" width="1.5" height="5" fill="#4a4a4a"/></svg>
<div style="left:299.6px;top:195.4px;width:10.6px;height:0.8px;background:#b8b8b8;"></div>
<svg style="left:300.4px;top:199.4px;" width="9.5" height="9.5" viewBox="0 0 9.5 9.5"><rect x="0.4" y="0.4" width="8" height="8.2" fill="#ececec" stroke="#a8a8a8" stroke-width="0.7"/><path d="M2 0.6 V8.6 M0.6 3 H8.4 M0.6 5.8 H8.4" stroke="#a8a8a8" stroke-width="0.6" stroke-dasharray="1 0.8"/></svg>
<div style="left:299px;top:210.6px;width:12.2px;height:12.4px;background:#cbe3f8;border:0.6px solid #92c2ec;box-sizing:border-box;"></div>
<svg style="left:300.6px;top:212px;" width="9.5" height="9.5" viewBox="0 0 9.5 9.5"><path d="M0.6 1.2 H2.6 L4 8 H5.6 V1.2 H7.2 V8 H8.8" fill="none" stroke="#2f7f8f" stroke-width="0.9"/></svg>
<svg style="left:300.4px;top:227px;" width="9.5" height="9.5" viewBox="0 0 9.5 9.5"><rect x="0.4" y="0.6" width="8.2" height="7.6" fill="#ececec" stroke="#a8a8a8" stroke-width="0.7"/><path d="M0.6 2.6 H8.6" stroke="#a8a8a8" stroke-width="0.7"/><path d="M1.6 4.6 H7.6" stroke="#b0b0b0" stroke-width="0.6" stroke-dasharray="1 0.7"/></svg>
<div style="left:312.6px;top:43.8px;width:525.2px;height:322.6px;background:#000;"></div>
<div style="left:313.4px;top:62.7px;width:79.4px;height:1.6px;background:#8e8e8e;"></div>
<div style="left:313.8px;top:64.2px;width:78.8px;height:13.4px;background:#fff;"></div>
<span class="t" style="left:318.2px;top:67.20px;font-size:7.0px;color:#111;font-weight:bold;letter-spacing:0.092px;">Name</span>
<div style="left:325.6px;top:77.8px;width:67px;height:105.1px;background:#f0f0f0;"></div>
<div style="left:326px;top:182.4px;width:66.6px;height:0.7px;background:#fafafa;"></div>
<div style="left:392.2px;top:64.2px;width:0.6px;height:118.6px;background:#a8a8a8;"></div>
<svg style="left:316.8px;top:80.85px;" width="6" height="7" viewBox="0 0 6 7"><path d="M0.3 0.3 L5.2 3.4 L0.3 6.5 Z" fill="#f2f2f2"/></svg>
<svg style="left:327.4px;top:78.85px;" width="10.4" height="10.4" viewBox="0 0 10.4 10.4"><path d="M0 0.6 H5 L6.6 2.6 L8.3 0.4 H9.6 V6.2 H8.3 L6.6 4.1 L5 6.2 H0 Z" fill="url(#bg1)"/><circle cx="7.2" cy="6.4" r="2.5" fill="#3a74c8" stroke="#3a3a3a" stroke-width="0.3"/><circle cx="6.6000000000000005" cy="5.7" r="0.7" fill="#fff" opacity="0.55"/></svg>
<span class="t" style="left:340.5px;top:79.65px;font-size:7.0px;color:#111;letter-spacing:-0.300px;transform-origin:0 0;transform:scaleX(0.9924);">seg[0:6]</span>
<svg style="left:316.8px;top:92.6px;" width="6" height="7" viewBox="0 0 6 7"><path d="M0.3 0.3 L5.2 3.4 L0.3 6.5 Z" fill="#f2f2f2"/></svg>
<svg style="left:327.4px;top:90.6px;" width="10.4" height="10.4" viewBox="0 0 10.4 10.4"><path d="M0 0.6 H5 L6.6 2.6 L8.3 0.4 H9.6 V6.2 H8.3 L6.6 4.1 L5 6.2 H0 Z" fill="url(#bg1)"/><circle cx="7.2" cy="6.4" r="2.5" fill="#3a74c8" stroke="#3a3a3a" stroke-width="0.3"/><circle cx="6.6000000000000005" cy="5.7" r="0.7" fill="#fff" opacity="0.55"/></svg>
<span class="t" style="left:340.5px;top:91.40px;font-size:7.0px;color:#111;letter-spacing:-0.296px;">an[3:0]</span>
<svg style="left:327.2px;top:102.25px;" width="10" height="10.4" viewBox="0 0 10 10.4"><path d="M0.4 0.5 H2.4 V7 H4.4 V0.7 H6.2 V4" fill="none" stroke="#3a84b4" stroke-width="0.8"/><circle cx="7.1" cy="6.5" r="2.5" fill="#3a74c8" stroke="#3a3a3a" stroke-width="0.3"/><circle cx="6.5" cy="5.8" r="0.7" fill="#fff" opacity="0.55"/></svg>
<span class="t" style="left:340.5px;top:103.15px;font-size:7.0px;color:#111;letter-spacing:-0.198px;">dp</span>
<svg style="left:327.2px;top:114.0px;" width="10" height="10.4" viewBox="0 0 10 10.4"><path d="M0.4 0.5 H2.4 V7 H4.4 V0.7 H6.2 V4" fill="none" stroke="#3a84b4" stroke-width="0.8"/><circle cx="7.1" cy="6.5" r="2.5" fill="#3a74c8" stroke="#3a3a3a" stroke-width="0.3"/><circle cx="6.5" cy="5.8" r="0.7" fill="#fff" opacity="0.55"/></svg>
<span class="t" style="left:340.5px;top:114.90px;font-size:7.0px;color:#111;letter-spacing:-0.300px;transform-origin:0 0;transform:scaleX(0.9924);">ck</span>
<svg style="left:316.8px;top:127.85px;" width="6" height="7" viewBox="0 0 6 7"><path d="M0.3 0.3 L5.2 3.4 L0.3 6.5 Z" fill="#f2f2f2"/></svg>
<svg style="left:327.4px;top:125.85px;" width="10.4" height="10.4" viewBox="0 0 10.4 10.4"><path d="M0 0.6 H5 L6.6 2.6 L8.3 0.4 H9.6 V6.2 H8.3 L6.6 4.1 L5 6.2 H0 Z" fill="url(#bg1)"/><circle cx="7.2" cy="6.4" r="2.5" fill="#3a74c8" stroke="#3a3a3a" stroke-width="0.3"/><circle cx="6.6000000000000005" cy="5.7" r="0.7" fill="#fff" opacity="0.55"/></svg>
<span class="t" style="left:340.5px;top:126.65px;font-size:7.0px;color:#111;letter-spacing:-0.300px;transform-origin:0 0;transform:scaleX(0.9770);">a[3:0]</span>
<svg style="left:316.8px;top:139.6px;" width="6" height="7" viewBox="0 0 6 7"><path d="M0.3 0.3 L5.2 3.4 L0.3 6.5 Z" fill="#f2f2f2"/></svg>
<svg style="left:327.4px;top:137.6px;" width="10.4" height="10.4" viewBox="0 0 10.4 10.4"><path d="M0 0.6 H5 L6.6 2.6 L8.3 0.4 H9.6 V6.2 H8.3 L6.6 4.1 L5 6.2 H0 Z" fill="url(#bg1)"/><circle cx="7.2" cy="6.4" r="2.5" fill="#3a74c8" stroke="#3a3a3a" stroke-width="0.3"/><circle cx="6.6000000000000005" cy="5.7" r="0.7" fill="#fff" opacity="0.55"/></svg>
<span class="t" style="left:340.5px;top:138.40px;font-size:7.0px;color:#111;letter-spacing:-0.276px;">b[3:0]</span>
<svg style="left:316.8px;top:151.35px;" width="6" height="7" viewBox="0 0 6 7"><path d="M0.3 0.3 L5.2 3.4 L0.3 6.5 Z" fill="#f2f2f2"/></svg>
<svg style="left:327.4px;top:149.35px;" width="10.4" height="10.4" viewBox="0 0 10.4 10.4"><path d="M0 0.6 H5 L6.6 2.6 L8.3 0.4 H9.6 V6.2 H8.3 L6.6 4.1 L5 6.2 H0 Z" fill="url(#bg1)"/><circle cx="7.2" cy="6.4" r="2.5" fill="#3a74c8" stroke="#3a3a3a" stroke-width="0.3"/><circle cx="6.6000000000000005" cy="5.7" r="0.7" fill="#fff" opacity="0.55"/></svg>
<span class="t" style="left:340.5px;top:150.15px;font-size:7.0px;color:#111;letter-spacing:-0.126px;">op[3:0]</span>
<svg style="left:316.8px;top:163.1px;" width="6" height="7" viewBox="0 0 6 7"><path d="M0.3 0.3 L5.2 3.4 L0.3 6.5 Z" fill="#f2f2f2"/></svg>
<svg style="left:327.4px;top:161.1px;" width="10.4" height="10.4" viewBox="0 0 10.4 10.4"><path d="M0 0.6 H5 L6.6 2.6 L8.3 0.4 H9.6 V6.2 H8.3 L6.6 4.1 L5 6.2 H0 Z" fill="url(#bg1)"/><circle cx="7.2" cy="6.4" r="2.5" fill="#3a74c8" stroke="#3a3a3a" stroke-width="0.3"/><circle cx="6.6000000000000005" cy="5.7" r="0.7" fill="#fff" opacity="0.55"/></svg>
<span class="t" style="left:340.5px;top:161.90px;font-size:7.0px;color:#111;letter-spacing:-0.175px;">np[31:0]</span>
<svg style="left:316.8px;top:174.85px;" width="6" height="7" viewBox="0 0 6 7"><path d="M0.3 0.3 L5.2 3.4 L0.3 6.5 Z" fill="#f2f2f2"/></svg>
<svg style="left:327.4px;top:172.85px;" width="10.4" height="10.4" viewBox="0 0 10.4 10.4"><path d="M0 0.6 H5 L6.6 2.6 L8.3 0.4 H9.6 V6.2 H8.3 L6.6 4.1 L5 6.2 H0 Z" fill="url(#bg1)"/><circle cx="7.2" cy="6.4" r="2.5" fill="#3a74c8" stroke="#3a3a3a" stroke-width="0.3"/><circle cx="6.6000000000000005" cy="5.7" r="0.7" fill="#fff" opacity="0.55"/></svg>
<span class="t" style="left:340.5px;top:173.65px;font-size:7.0px;color:#111;letter-spacing:-0.300px;transform-origin:0 0;transform:scaleX(0.9915);">seed[31:0]</span>
<div style="left:393.2px;top:43.8px;width:1.8px;height:322.6px;background:#f4f4f4;"></div>
<div style="left:395px;top:43.8px;width:1px;height:322.6px;background:#4a4a4a;"></div>
<div style="left:396px;top:62.7px;width:52.4px;height:1.6px;background:#8e8e8e;"></div>
<div style="left:396.4px;top:64.2px;width:52px;height:13.4px;background:#fff;"></div>
<span class="t" style="left:400.5px;top:67.20px;font-size:7.0px;color:#111;font-weight:bold;letter-spacing:-0.110px;">Value</span>
<div style="left:396.4px;top:78px;width:51.6px;height:106px;overflow:hidden;">
<span class="t" style="left:2px;top:3.25px;font-size:6.7px;color:#c9c9c9;letter-spacing:-0.300px;transform-origin:0 0;transform:scaleX(0.9732);">XXXXXXX</span>
<span class="t" style="left:2px;top:15.00px;font-size:6.7px;color:#c9c9c9;letter-spacing:-0.300px;transform-origin:0 0;transform:scaleX(0.9527);">XXXX</span>
<span class="t" style="left:2px;top:26.75px;font-size:6.7px;color:#c9c9c9;">X</span>
<span class="t" style="left:2px;top:38.50px;font-size:6.7px;color:#c9c9c9;">0</span>
<span class="t" style="left:2px;top:50.25px;font-size:6.7px;color:#c9c9c9;letter-spacing:0.146px;">0000</span>
<span class="t" style="left:2px;top:62.00px;font-size:6.7px;color:#c9c9c9;letter-spacing:0.146px;">1000</span>
<span class="t" style="left:2px;top:73.75px;font-size:6.7px;color:#c9c9c9;letter-spacing:0.146px;">1000</span>
<span class="t" style="left:2px;top:85.50px;font-size:6.7px;color:#c9c9c9;letter-spacing:0.062px;">00000000000000000000000000010100</span>
<span class="t" style="left:2px;top:97.25px;font-size:6.7px;color:#c9c9c9;letter-spacing:0.062px;">00000000000000000000000000000001</span>
</div>
<div style="left:448.3px;top:43.8px;width:1.8px;height:322.6px;background:#f4f4f4;"></div>
<div style="left:450.1px;top:43.8px;width:1.2px;height:322.6px;background:#303030;"></div>
<div style="left:313.4px;top:342.6px;width:524.4px;height:0.9px;background:#7f8791;"></div>
<div style="left:451px;top:44px;width:385.20000000000005px;height:322px;overflow:hidden;"><svg style="left:-451px;top:-44px;" width="848" height="400" viewBox="0 0 848 400"><path d="M451.40 67 V343" stroke="#b4b4b4" stroke-width="0.7"/><path d="M459.39 75 V77.4" stroke="#c4c4c4" stroke-width="0.8"/><path d="M467.38 75 V77.4" stroke="#c4c4c4" stroke-width="0.8"/><path d="M475.37 75 V77.4" stroke="#c4c4c4" stroke-width="0.8"/><path d="M483.36 75 V77.4" stroke="#c4c4c4" stroke-width="0.8"/><path d="M491.35 72 V77.4" stroke="#c4c4c4" stroke-width="0.8"/><path d="M499.34 75 V77.4" stroke="#c4c4c4" stroke-width="0.8"/><path d="M507.33 75 V77.4" stroke="#c4c4c4" stroke-width="0.8"/><path d="M515.32 75 V77.4" stroke="#c4c4c4" stroke-width="0.8"/><path d="M523.31 75 V77.4" stroke="#c4c4c4" stroke-width="0.8"/><path d="M531.30 67 V343" stroke="#b4b4b4" stroke-width="0.7"/><path d="M539.29 75 V77.4" stroke="#c4c4c4" stroke-width="0.8"/><path d="M547.28 75 V77.4" stroke="#c4c4c4" stroke-width="0.8"/><path d="M555.27 75 V77.4" stroke="#c4c4c4" stroke-width="0.8"/><path d="M563.26 75 V77.4" stroke="#c4c4c4" stroke-width="0.8"/><path d="M571.25 72 V77.4" stroke="#c4c4c4" stroke-width="0.8"/><path d="M579.24 75 V77.4" stroke="#c4c4c4" stroke-width="0.8"/><path d="M587.23 75 V77.4" stroke="#c4c4c4" stroke-width="0.8"/><path d="M595.22 75 V77.4" stroke="#c4c4c4" stroke-width="0.8"/><path d="M603.21 75 V77.4" stroke="#c4c4c4" stroke-width="0.8"/><path d="M611.20 67 V343" stroke="#b4b4b4" stroke-width="0.7"/><path d="M619.19 75 V77.4" stroke="#c4c4c4" stroke-width="0.8"/><path d="M627.18 75 V77.4" stroke="#c4c4c4" stroke-width="0.8"/><path d="M635.17 75 V77.4" stroke="#c4c4c4" stroke-width="0.8"/><path d="M643.16 75 V77.4" stroke="#c4c4c4" stroke-width="0.8"/><path d="M651.15 72 V77.4" stroke="#c4c4c4" stroke-width="0.8"/><path d="M659.14 75 V77.4" stroke="#c4c4c4" stroke-width="0.8"/><path d="M667.13 75 V77.4" stroke="#c4c4c4" stroke-width="0.8"/><path d="M675.12 75 V77.4" stroke="#c4c4c4" stroke-width="0.8"/><path d="M683.11 75 V77.4" stroke="#c4c4c4" stroke-width="0.8"/><path d="M691.10 67 V343" stroke="#b4b4b4" stroke-width="0.7"/><path d="M699.09 75 V77.4" stroke="#c4c4c4" stroke-width="0.8"/><path d="M707.08 75 V77.4" stroke="#c4c4c4" stroke-width="0.8"/><path d="M715.07 75 V77.4" stroke="#c4c4c4" stroke-width="0.8"/><path d="M723.06 75 V77.4" stroke="#c4c4c4" stroke-width="0.8"/><path d="M731.05 72 V77.4" stroke="#c4c4c4" stroke-width="0.8"/><path d="M739.04 75 V77.4" stroke="#c4c4c4" stroke-width="0.8"/><path d="M747.03 75 V77.4" stroke="#c4c4c4" stroke-width="0.8"/><path d="M755.02 75 V77.4" stroke="#c4c4c4" stroke-width="0.8"/><path d="M763.01 75 V77.4" stroke="#c4c4c4" stroke-width="0.8"/><path d="M771.00 67 V343" stroke="#b4b4b4" stroke-width="0.7"/><path d="M778.99 75 V77.4" stroke="#c4c4c4" stroke-width="0.8"/><path d="M786.98 75 V77.4" stroke="#c4c4c4" stroke-width="0.8"/><path d="M794.97 75 V77.4" stroke="#c4c4c4" stroke-width="0.8"/><path d="M802.96 75 V77.4" stroke="#c4c4c4" stroke-width="0.8"/><path d="M810.95 72 V77.4" stroke="#c4c4c4" stroke-width="0.8"/><path d="M818.94 75 V77.4" stroke="#c4c4c4" stroke-width="0.8"/><path d="M826.93 75 V77.4" stroke="#c4c4c4" stroke-width="0.8"/><path d="M834.92 75 V77.4" stroke="#c4c4c4" stroke-width="0.8"/><path d="M452.0 77.2 H836.2" stroke="#c4c4c4" stroke-width="0.9"/><path d="M452.3 67.5 V343" stroke="#9a9a9a" stroke-width="0.7"/><path d="M839.2 79.39999999999999 H454.79999999999995 Q453.79999999999995 79.39999999999999 453.0 80.99999999999999 L452.29999999999995 83.6 L453.0 86.2 Q453.79999999999995 87.8 454.79999999999995 87.8 H839.2" fill="none" stroke="#ff0808" stroke-width="1.5" stroke-linejoin="round"/><path d="M839.2 91.3 H454.79999999999995 Q453.79999999999995 91.3 453.0 92.89999999999999 L452.29999999999995 95.5 L453.0 98.10000000000001 Q453.79999999999995 99.7 454.79999999999995 99.7 H839.2" fill="none" stroke="#ff0808" stroke-width="1.5" stroke-linejoin="round"/><rect x="452.0" y="107.65" width="384.20000000000005" height="4.5" fill="#4e0000"/><path d="M452.0 107.25 H836.2" stroke="#ff0808" stroke-width="1.5"/><rect x="459.39" y="114.75" width="7.99" height="7.75" fill="#004400"/><rect x="475.37" y="114.75" width="7.99" height="7.75" fill="#004400"/><rect x="491.35" y="114.75" width="7.99" height="7.75" fill="#004400"/><rect x="507.33" y="114.75" width="7.99" height="7.75" fill="#004400"/><rect x="523.31" y="114.75" width="7.99" height="7.75" fill="#004400"/><rect x="539.29" y="114.75" width="7.99" height="7.75" fill="#004400"/><rect x="555.27" y="114.75" width="7.99" height="7.75" fill="#004400"/><rect x="571.25" y="114.75" width="7.99" height="7.75" fill="#004400"/><rect x="587.23" y="114.75" width="7.99" height="7.75" fill="#004400"/><rect x="603.21" y="114.75" width="7.99" height="7.75" fill="#004400"/><rect x="619.19" y="114.75" width="7.99" height="7.75" fill="#004400"/><rect x="635.17" y="114.75" width="7.99" height="7.75" fill="#004400"/><rect x="651.15" y="114.75" width="7.99" height="7.75" fill="#004400"/><rect x="667.13" y="114.75" width="7.99" height="7.75" fill="#004400"/><rect x="683.11" y="114.75" width="7.99" height="7.75" fill="#004400"/><rect x="699.09" y="114.75" width="7.99" height="7.75" fill="#004400"/><rect x="715.07" y="114.75" width="7.99" height="7.75" fill="#004400"/><rect x="731.05" y="114.75" width="7.99" height="7.75" fill="#004400"/><rect x="747.03" y="114.75" width="7.99" height="7.75" fill="#004400"/><rect x="763.01" y="114.75" width="7.99" height="7.75" fill="#004400"/><rect x="778.99" y="114.75" width="7.99" height="7.75" fill="#004400"/><rect x="794.97" y="114.75" width="7.99" height="7.75" fill="#004400"/><rect x="810.95" y="114.75" width="7.99" height="7.75" fill="#004400"/><rect x="826.93" y="114.75" width="7.99" height="7.75" fill="#004400"/><path d="M452.0 122.5 H459.39 V114.75 H467.38 V122.5 H475.37 V114.75 H483.36 V122.5 H491.35 V114.75 H499.34 V122.5 H507.33 V114.75 H515.32 V122.5 H523.31 V114.75 H531.30 V122.5 H539.29 V114.75 H547.28 V122.5 H555.27 V114.75 H563.26 V122.5 H571.25 V114.75 H579.24 V122.5 H587.23 V114.75 H595.22 V122.5 H603.21 V114.75 H611.20 V122.5 H619.19 V114.75 H627.18 V122.5 H635.17 V114.75 H643.16 V122.5 H651.15 V114.75 H659.14 V122.5 H667.13 V114.75 H675.12 V122.5 H683.11 V114.75 H691.10 V122.5 H699.09 V114.75 H707.08 V122.5 H715.07 V114.75 H723.06 V122.5 H731.05 V114.75 H739.04 V122.5 H747.03 V114.75 H755.02 V122.5 H763.01 V114.75 H771.00 V122.5 H778.99 V114.75 H786.98 V122.5 H794.97 V114.75 H802.96 V122.5 H810.95 V114.75 H818.94 V122.5 H826.93 V114.75 H834.92 V122.5 H836.2" fill="none" stroke="#10ee10" stroke-width="1.5" stroke-linejoin="miter"/><path d="M839.2 126.55 H454.79999999999995 Q453.79999999999995 126.55 453.0 128.15 L452.29999999999995 130.75 L453.0 133.35 Q453.79999999999995 134.95 454.79999999999995 134.95 H839.2" fill="none" stroke="#ff0808" stroke-width="1.5" stroke-linejoin="round"/><path d="M839.2 138.3 H454.79999999999995 Q453.79999999999995 138.3 453.0 139.9 L452.29999999999995 142.5 L453.0 145.1 Q453.79999999999995 146.7 454.79999999999995 146.7 H839.2" fill="none" stroke="#ff0808" stroke-width="1.5" stroke-linejoin="round"/><path d="M839.2 150.05 H454.79999999999995 Q453.79999999999995 150.05 453.0 151.65 L452.29999999999995 154.25 L453.0 156.85 Q453.79999999999995 158.45 454.79999999999995 158.45 H839.2" fill="none" stroke="#10ee10" stroke-width="1.5" stroke-linejoin="round"/><path d="M839.2 161.8 H454.79999999999995 Q453.79999999999995 161.8 453.0 163.4 L452.29999999999995 166.0 L453.0 168.6 Q453.79999999999995 170.2 454.79999999999995 170.2 H839.2" fill="none" stroke="#10ee10" stroke-width="1.5" stroke-linejoin="round"/><path d="M839.2 173.55 H454.79999999999995 Q453.79999999999995 173.55 453.0 175.15 L452.29999999999995 177.75 L453.0 180.35 Q453.79999999999995 181.95 454.79999999999995 181.95 H839.2" fill="none" stroke="#10ee10" stroke-width="1.5" stroke-linejoin="round"/></svg>
<span class="t" style="left:1.3999999999999773px;top:23.90px;font-size:6.7px;color:#dcdcdc;letter-spacing:-0.183px;">0 ns</span>
<span class="t" style="left:82.0px;top:23.90px;font-size:6.7px;color:#dcdcdc;letter-spacing:-0.300px;transform-origin:0 0;transform:scaleX(0.9488);">200 ns</span>
<span class="t" style="left:161.9000000000001px;top:23.90px;font-size:6.7px;color:#dcdcdc;letter-spacing:-0.300px;transform-origin:0 0;transform:scaleX(0.9488);">400 ns</span>
<span class="t" style="left:241.80000000000007px;top:23.90px;font-size:6.7px;color:#dcdcdc;letter-spacing:-0.300px;transform-origin:0 0;transform:scaleX(0.9488);">600 ns</span>
<span class="t" style="left:321.70000000000005px;top:23.90px;font-size:6.7px;color:#dcdcdc;letter-spacing:-0.300px;transform-origin:0 0;transform:scaleX(0.9488);">800 ns</span>
<span class="t" style="left:180.95000000000005px;top:36.05px;font-size:7.0px;color:#e4e4e4;letter-spacing:-0.300px;transform-origin:0 0;transform:scaleX(0.7971);">XXXXXXX</span>
<span class="t" style="left:186.20000000000005px;top:47.80px;font-size:7.0px;color:#e4e4e4;letter-spacing:-0.300px;transform-origin:0 0;transform:scaleX(0.7938);">XXXX</span>
<span class="t" style="left:186.20000000000005px;top:83.05px;font-size:7.0px;color:#e4e4e4;letter-spacing:-0.300px;transform-origin:0 0;transform:scaleX(0.7938);">XXXX</span>
<span class="t" style="left:186.20000000000005px;top:94.80px;font-size:7.0px;color:#e4e4e4;letter-spacing:-0.300px;transform-origin:0 0;transform:scaleX(0.7938);">XXXX</span>
<span class="t" style="left:186.4000000000001px;top:106.55px;font-size:7.0px;color:#e4e4e4;letter-spacing:-0.300px;transform-origin:0 0;transform:scaleX(0.9361);">0001</span>
<span class="t" style="left:136.70000000000005px;top:118.30px;font-size:7.0px;color:#e4e4e4;letter-spacing:-0.300px;transform-origin:0 0;transform:scaleX(0.9815);">00000000000000000000000000010100</span>
<span class="t" style="left:136.70000000000005px;top:130.05px;font-size:7.0px;color:#e4e4e4;letter-spacing:-0.300px;transform-origin:0 0;transform:scaleX(0.9815);">00000000000000000000000000000001</span>
<div style="left:360px;top:0.20000000000000284px;width:30px;height:9px;border:0.9px solid #d8cc20;box-sizing:border-box;"></div>
<span class="t" style="left:362px;top:2.40px;font-size:6.7px;color:#e6da28;letter-spacing:-0.147px;">1,000.000 ns</span>
<span class="t" style="left:3.6999999999999886px;top:311.20px;font-size:6.9px;color:#d6d6d6;letter-spacing:-0.201px;">X1: 1,000.000 ns</span>
</div>
<div style="left:837.8px;top:43.8px;width:10.2px;height:332.6px;background:#f0f0f0;"></div>
<svg style="left:840.4px;top:47px;" width="6" height="4" viewBox="0 0 6 4"><path d="M0.6 3.4 L3 0.8 L5.4 3.4" fill="none" stroke="#9c9c9c" stroke-width="0.9"/></svg>
<svg style="left:840.4px;top:369.6px;" width="6" height="4" viewBox="0 0 6 4"><path d="M0.6 0.6 L3 3.2 L5.4 0.6" fill="none" stroke="#bdbdbd" stroke-width="0.9"/></svg>
<div style="left:312.6px;top:366.4px;width:525.2px;height:10px;background:#f0f0f0;"></div>
<svg style="left:315.6px;top:368.6px;" width="4" height="6" viewBox="0 0 4 6"><path d="M3.2 0.6 L0.8 3 L3.2 5.4" fill="none" stroke="#c2c2c2" stroke-width="0.95"/></svg>
<svg style="left:386.6px;top:368.6px;" width="4" height="6" viewBox="0 0 4 6"><path d="M0.8 0.6 L3.2 3 L0.8 5.4" fill="none" stroke="#c2c2c2" stroke-width="0.95"/></svg>
<svg style="left:397.4px;top:368.6px;" width="4" height="6" viewBox="0 0 4 6"><path d="M3.2 0.6 L0.8 3 L3.2 5.4" fill="none" stroke="#c2c2c2" stroke-width="0.95"/></svg>
<svg style="left:441px;top:368.6px;" width="4" height="6" viewBox="0 0 4 6"><path d="M0.8 0.6 L3.2 3 L0.8 5.4" fill="none" stroke="#c2c2c2" stroke-width="0.95"/></svg>
<svg style="left:452.6px;top:368.6px;" width="4" height="6" viewBox="0 0 4 6"><path d="M3.2 0.6 L0.8 3 L3.2 5.4" fill="none" stroke="#333" stroke-width="0.95"/></svg>
<svg style="left:830.8px;top:368.6px;" width="4" height="6" viewBox="0 0 4 6"><path d="M0.8 0.6 L3.2 3 L0.8 5.4" fill="none" stroke="#333" stroke-width="0.95"/></svg>
<div style="left:460.4px;top:367.4px;width:120.2px;height:8.2px;background:#c9c9c9;"></div>
<div style="left:517.6px;top:369.4px;width:4.2px;height:4.2px;background:#f0f0f0;"></div>
<div style="left:296.8px;top:376.8px;width:275.4px;height:12.4px;background:#f6f6f6;"></div>
<div style="left:296.8px;top:376.8px;width:0.7px;height:12px;background:#d2d2d2;"></div>
<div style="left:571.8px;top:376.8px;width:0.8px;height:13.6px;background:#c4c4c4;"></div>
<div style="left:572px;top:376.8px;width:276px;height:0.8px;background:#dadada;"></div>
<div style="left:297px;top:388.9px;width:275px;height:1.7px;background:#1e6fd0;"></div>
<div style="left:297px;top:391px;width:275px;height:2.3px;background:#fbfbfb;"></div>
<svg style="left:297px;top:391.6px;" width="275" height="1.4" viewBox="0 0 275 1.4"><path d="M0 0.6 H275" stroke="#9a9a9a" stroke-width="1" stroke-dasharray="1.2 1.2"/></svg>
<svg style="left:300px;top:378.6px;" width="10" height="10" viewBox="0 0 10 10"><rect x="0.4" y="0.5" width="9" height="8.6" rx="0.6" fill="#fff" stroke="#2f6fd0" stroke-width="0.8"/><rect x="0.4" y="0.5" width="9" height="1.9" fill="#2f6fd0"/><path d="M1.6 7 L2.6 4.6 L3.6 7 L4.6 4.6 L5.6 7 L6.6 4.6 L7.6 7 L8.4 5" fill="none" stroke="#2f6fd0" stroke-width="0.55"/></svg>
<span class="t" style="left:415.8px;top:380.40px;font-size:7.0px;color:#111;letter-spacing:-0.133px;">Default.wcfg</span>
<svg style="left:559.2px;top:379.6px;" width="9.6" height="9" viewBox="0 0 9.6 9"><rect x="0.2" y="0.2" width="9" height="8.4" rx="1.6" fill="#e2583e"/><path d="M2.8 2.6 L6.4 6.2 M6.4 2.6 L2.8 6.2" stroke="#fff" stroke-width="1.5"/></svg>
<div style="left:15px;top:393.8px;width:833px;height:0.7px;background:#dedede;"></div>
<div style="left:15px;top:394.8px;width:833px;height:10px;background:#f1f1f1;border:0.8px solid #c6c6c6;box-sizing:border-box;"></div>
<div style="left:15px;top:404.2px;width:833px;height:0.8px;background:#b4b4b4;"></div>
<span class="t" style="left:17.4px;top:396.70px;font-size:7.0px;color:#111;letter-spacing:-0.300px;transform-origin:0 0;transform:scaleX(0.9437);">Console</span>
<svg style="left:813.8px;top:396.6px;" width="34" height="7" viewBox="0 0 34 7"><path d="M0.2 3.2 L2 1.4 V2.7 H4.2 V1.4 L6 3.2 L4.2 5 V3.7 H2 V5 Z" fill="#111"/>
<rect x="9" y="0.6" width="4.8" height="5.4" fill="none" stroke="#111" stroke-width="0.8"/><path d="M9 1 H13.8" stroke="#111" stroke-width="1.2"/>
<rect x="18.2" y="2.4" width="3.4" height="3.4" fill="none" stroke="#111" stroke-width="0.75"/><path d="M19.6 2.2 V0.8 H23.2 V4.4 H21.8" fill="none" stroke="#111" stroke-width="0.75"/><path d="M19.6 1 H23.2" stroke="#111" stroke-width="1"/>
<path d="M27.4 0.8 L32 5.8 M32 0.8 L27.4 5.8" stroke="#111" stroke-width="1"/></svg>
<div style="left:15.2px;top:405.8px;width:832.8px;height:68.8px;background:#fff;border:0.9px solid #8c9099;box-sizing:border-box;"></div>
<div style="left:836.8px;top:406.8px;width:10.4px;height:67px;background:#f0f0f0;"></div>
<svg style="left:839.4px;top:409.8px;" width="6" height="4" viewBox="0 0 6 4"><path d="M0.6 3.4 L3 0.8 L5.4 3.4" fill="none" stroke="#444" stroke-width="1"/></svg>
<svg style="left:839.4px;top:468px;" width="6" height="4" viewBox="0 0 6 4"><path d="M0.6 0.6 L3 3.2 L5.4 0.6" fill="none" stroke="#444" stroke-width="1"/></svg>
<div style="left:837.6px;top:447.6px;width:8.8px;height:16.2px;background:#c9c9c9;"></div>
<div style="left:839.8px;top:453.4px;width:4.4px;height:4.6px;background:#f0f0f0;"></div>
<span class="t" style="left:18px;top:409.00px;font-size:7.0px;color:#111;letter-spacing:-0.300px;transform-origin:0 0;transform:scaleX(0.9836);">This is a Full version of ISim.</span>
<span class="t" style="left:18px;top:417.28px;font-size:7.0px;color:#111;letter-spacing:-0.300px;transform-origin:0 0;transform:scaleX(0.9836);">Time resolution is 1 ps</span>
<span class="t" style="left:18px;top:425.56px;font-size:7.0px;color:#111;letter-spacing:-0.300px;transform-origin:0 0;transform:scaleX(0.9917);">Simulator is doing circuit initialization process.</span>
<span class="t" style="left:18px;top:433.84px;font-size:7.0px;color:#111;letter-spacing:0.576px;">+--*</span>
<span class="t" style="left:35px;top:433.84px;font-size:7.0px;color:#111;">A</span>
<span class="t" style="left:56.6px;top:433.84px;font-size:7.0px;color:#111;">B</span>
<span class="t" style="left:80px;top:433.84px;font-size:7.0px;color:#111;">Z</span>
<span class="t" style="left:18px;top:442.12px;font-size:7.0px;color:#111;letter-spacing:-0.300px;transform-origin:0 0;transform:scaleX(0.9924);">Finished circuit initialization process.</span>
<span class="t" style="left:17.8px;top:450.40px;font-size:7.0px;color:#111;letter-spacing:-0.300px;transform-origin:0 0;transform:scaleX(0.9636);">0001</span>
<span class="t" style="left:36px;top:450.40px;font-size:7.0px;color:#111;letter-spacing:0.029px;">xxxx</span>
<span class="t" style="left:52.2px;top:450.40px;font-size:7.0px;color:#111;letter-spacing:-0.300px;transform-origin:0 0;transform:scaleX(0.9603);">( x)</span>
<span class="t" style="left:65.5px;top:450.40px;font-size:7.0px;color:#111;letter-spacing:0.143px;">xxxx</span>
<span class="t" style="left:81.2px;top:450.40px;font-size:7.0px;color:#111;letter-spacing:-0.088px;">( x)</span>
<span class="t" style="left:96.5px;top:450.40px;font-size:7.0px;color:#111;letter-spacing:-0.067px;">xxxxxxxx</span>
<span class="t" style="left:126.6px;top:450.40px;font-size:7.0px;color:#111;letter-spacing:-0.147px;">(  x)</span>
<span class="t" style="left:17.8px;top:458.68px;font-size:7.0px;color:#111;letter-spacing:-0.300px;transform-origin:0 0;transform:scaleX(0.9636);">1000</span>
<span class="t" style="left:36px;top:458.68px;font-size:7.0px;color:#111;letter-spacing:-0.300px;transform-origin:0 0;transform:scaleX(0.9705);">0000</span>
<span class="t" style="left:52.2px;top:458.68px;font-size:7.0px;color:#111;letter-spacing:-0.300px;transform-origin:0 0;transform:scaleX(0.9206);">( 0)</span>
<span class="t" style="left:65.5px;top:458.68px;font-size:7.0px;color:#111;letter-spacing:-0.300px;transform-origin:0 0;transform:scaleX(0.9981);">1000</span>
<span class="t" style="left:81.2px;top:458.68px;font-size:7.0px;color:#111;letter-spacing:-0.200px;">( 8)</span>
<span class="t" style="left:96.5px;top:458.68px;font-size:7.0px;color:#111;letter-spacing:-0.300px;transform-origin:0 0;transform:scaleX(0.9514);">00001000</span>
<span class="t" style="left:126.6px;top:458.68px;font-size:7.0px;color:#111;letter-spacing:-0.234px;">(  8)</span>
<span class="t" style="left:18.2px;top:466.96px;font-size:7.0px;color:#111;font-weight:bold;letter-spacing:0.250px;">ISim&gt;</span>
<div style="left:16px;top:474.4px;width:47px;height:14px;background:#fff;"></div>
<div style="left:63px;top:475px;width:0.7px;height:13px;background:#dadada;"></div>
<div style="left:63px;top:487.4px;width:271px;height:0.7px;background:#dedede;"></div>
<div style="left:131.7px;top:476px;width:0.7px;height:11.4px;background:#dadada;"></div>
<div style="left:189.5px;top:476px;width:0.7px;height:11.4px;background:#dadada;"></div>
<div style="left:268.4px;top:476px;width:0.7px;height:11.4px;background:#dadada;"></div>
<div style="left:334px;top:476px;width:0.7px;height:11.4px;background:#dadada;"></div>
<svg style="left:19px;top:476.6px;" width="10" height="10" viewBox="0 0 10 10"><rect x="0.4" y="0.6" width="9" height="7.4" rx="0.6" fill="#3b4654" stroke="#5f86c0" stroke-width="0.8"/><rect x="1.4" y="1.8" width="4" height="1.6" fill="#9fb2c8"/><path d="M0.4 8.6 H9.4" stroke="#8fa6c6" stroke-width="0.8"/></svg>
<span class="t" style="left:34.5px;top:478.60px;font-size:7.0px;color:#111;letter-spacing:-0.300px;transform-origin:0 0;transform:scaleX(0.9352);">Console</span>
<svg style="left:66px;top:476.6px;" width="10" height="10" viewBox="0 0 10 10"><rect x="0.4" y="0.5" width="8.8" height="8.8" fill="#f2f2f2" stroke="#8a9ab4" stroke-width="0.7"/><rect x="0.4" y="0.5" width="8.8" height="1.8" fill="#3f7fd6"/><path d="M1.6 4 H6 M1.6 5.6 H6 M1.6 7.2 H6 M7.6 3 V8.6" stroke="#b4b4b4" stroke-width="0.6"/></svg>
<span class="t" style="left:81.5px;top:478.60px;font-size:7.0px;color:#111;letter-spacing:-0.300px;transform-origin:0 0;transform:scaleX(0.9623);">Compilation Log</span>
<svg style="left:135.6px;top:477.6px;" width="7" height="7" viewBox="0 0 7 7"><circle cx="3.4" cy="3.4" r="3" fill="#d21414"/></svg>
<span class="t" style="left:149.8px;top:478.60px;font-size:7.0px;color:#111;letter-spacing:-0.300px;transform-origin:0 0;transform:scaleX(0.9965);">Breakpoints</span>
<svg style="left:193px;top:477px;" width="10" height="10" viewBox="0 0 10 10"><path d="M0.2 0.6 H3 L3.8 1.6 H6 V4 H0.2 Z" fill="#f2c42c"/><g transform="translate(0.6,2.2) scale(0.84)"><path d="M1.6 1 H3.6 L4.2 3 H5.6 L6.2 1 H8.2 L9.6 6.8 Q9.8 8.8 7.8 8.8 Q6 8.8 6 7 V5 H3.8 V7 Q3.8 8.8 2 8.8 Q0 8.8 0.2 6.8 Z" fill="#151515"/></g></svg>
<span class="t" style="left:207.7px;top:478.60px;font-size:7.0px;color:#111;letter-spacing:-0.300px;transform-origin:0 0;transform:scaleX(0.9757);">Find in Files Results</span>
<svg style="left:272px;top:476.4px;" width="10.5" height="10.5" viewBox="0 0 10.5 10.5"><rect x="0.4" y="0.5" width="8" height="8.6" fill="#f4f8ff" stroke="#3f7fd6" stroke-width="0.7"/><rect x="0.4" y="0.5" width="8" height="1.7" fill="#3f7fd6"/><g transform="translate(3.6,4.4) scale(0.66)"><path d="M1.6 1 H3.6 L4.2 3 H5.6 L6.2 1 H8.2 L9.6 6.8 Q9.8 8.8 7.8 8.8 Q6 8.8 6 7 V5 H3.8 V7 Q3.8 8.8 2 8.8 Q0 8.8 0.2 6.8 Z" fill="#222"/></g></svg>
<span class="t" style="left:287.3px;top:478.60px;font-size:7.0px;color:#111;letter-spacing:-0.300px;transform-origin:0 0;transform:scaleX(0.9742);">Search Results</span>
<div style="left:773.2px;top:491.2px;width:73px;height:13.4px;background:#f2f2f2;border:0.8px solid #d4d4d4;box-sizing:border-box;"></div>
<div style="left:773.2px;top:491.2px;width:0.8px;height:13.4px;background:#bcbcbc;"></div>
<div style="left:773.2px;top:491.2px;width:73px;height:0.7px;background:#c6c6c6;"></div>
<span class="t" style="left:775.6px;top:494.60px;font-size:7.0px;color:#111;letter-spacing:-0.193px;">Sim Time: 1,000,000 ps</span>
<div style="left:0px;top:506.3px;width:848px;height:23.7px;background:linear-gradient(90deg,#1c3946 0%,#1f3645 25%,#1e3143 45%,#1b2a42 75%,#1a2743 100%);"></div>
<div style="left:259.5px;top:506.3px;width:29.1px;height:23.7px;background:#4b5e6a;"></div>
<div style="left:288.6px;top:506.3px;width:28.3px;height:23.7px;background:#c0692d;"></div>
<div style="left:89px;top:528.6px;width:23px;height:1.4px;background:#7cbcec;"></div>
<div style="left:204.3px;top:528.6px;width:23.69999999999999px;height:1.4px;background:#7cbcec;"></div>
<div style="left:233px;top:528.6px;width:23.69999999999999px;height:1.4px;background:#7cbcec;"></div>
<div style="left:259.5px;top:528.6px;width:29.100000000000023px;height:1.4px;background:#90c8f2;"></div>
<div style="left:288.6px;top:528.6px;width:28.299999999999955px;height:1.4px;background:#f5873a;"></div>
<svg style="left:9px;top:513px;" width="11" height="11" viewBox="0 0 11 11"><path d="M0.2 1.6 L4.4 1 V4.8 H0.2 Z M5 0.9 L10.4 0.1 V4.8 H5 Z M0.2 5.4 H4.4 V9.2 L0.2 8.6 Z M5 5.4 H10.4 V10.1 L5 9.3 Z" fill="#fff"/></svg>
<svg style="left:35px;top:509.6px;" width="16" height="16" viewBox="0 0 16 16"><circle cx="8.6" cy="6.2" r="4.9" fill="none" stroke="#fff" stroke-width="1.3"/><path d="M5.4 10 L1.4 14.6" stroke="#fff" stroke-width="1.5" stroke-linecap="round"/></svg>
<svg style="left:65.6px;top:513.6px;" width="11" height="9.5" viewBox="0 0 11 9.5"><rect x="2.2" y="1.6" width="5.8" height="5.4" fill="none" stroke="#e8eef2" stroke-width="0.9"/><path d="M0.5 1.6 V7 M9.8 1.6 V3 M9.8 4.2 V7" stroke="#e8eef2" stroke-width="0.9"/><path d="M2.2 0.3 H8 M2.2 8.4 H8" stroke="#e8eef2" stroke-width="0.6"/></svg>
<svg style="left:94px;top:512.6px;" width="14" height="12" viewBox="0 0 14 12"><path d="M0.4 1.2 Q0.4 0.4 1.2 0.4 H5 L6 1.6 H12.4 Q13.2 1.6 13.2 2.4 V10 H0.4 Z" fill="#f3b822"/><path d="M0.4 3.4 H13.2 V10.2 Q13.2 11 12.4 11 H1.2 Q0.4 11 0.4 10.2 Z" fill="#fbd45a"/><rect x="3" y="6.6" width="7.6" height="3.2" fill="#3d8fe0"/><rect x="4.8" y="8.2" width="4" height="2.9" fill="#fbd45a"/></svg>
<svg style="left:122px;top:510.6px;" width="15.5" height="15.5" viewBox="0 0 15.5 15.5"><circle cx="7.6" cy="8" r="6.9" fill="#f2542a"/><path d="M1 7 Q1.6 2.6 5.6 1.6 Q4.6 3.6 6 4.4 Q8 1.6 8.6 0.2 Q12.6 2 13.6 5.6 Q15 10 12 13" fill="#fbb225"/><circle cx="7.4" cy="8" r="3.7" fill="#7a3cc4"/><path d="M3.4 8.4 Q5 5.4 8.6 6.2 Q10.6 7 10.2 9.4 Q9.6 11.4 7.4 11.6 Q4.4 11.6 3.4 8.4Z" fill="#9446e0"/><path d="M2 10.6 Q6 15.6 12.4 12.4 Q8 13 5.6 10.6Z" fill="#e8283c"/></svg>
<svg style="left:151.4px;top:511.2px;" width="14.4" height="14.4" viewBox="0 0 14.4 14.4"><circle cx="7.2" cy="7.2" r="6.9" fill="#e33b2e"/><path d="M7.2 7.2 L1.3 3.7 A6.9 6.9 0 0 0 7.8 14.05 Z" fill="#2da94f"/><path d="M7.2 7.2 L7.8 14.05 A6.9 6.9 0 0 0 13.2 3.8 Z" fill="#fcc31e"/><path d="M7.2 7.2 L13.2 3.8 A6.9 6.9 0 0 0 1.3 3.7Z" fill="#e33b2e"/><circle cx="7.2" cy="7.2" r="3.3" fill="#fff"/><circle cx="7.2" cy="7.2" r="2.6" fill="#4a8af4"/></svg>
<svg style="left:180px;top:511.2px;" width="14.5" height="14.5" viewBox="0 0 14.5 14.5"><circle cx="7.2" cy="7.2" r="6.9" fill="#1c78d4"/><path d="M0.4 7.6 Q1 1 7.4 0.3 Q13 0.6 14 6 Q14 9 11 9.4 Q8.4 9.4 8.8 7.4 Q8.4 4.6 5.6 5 Q2.4 5.6 2.6 9.6Z" fill="#35c4d8"/><path d="M2.6 9.4 Q3 13.6 8 14 Q11.6 13.6 13 11 Q9 12.6 6.6 10.6 Q4.6 8.6 5.8 6.2 Q2.8 6.4 2.6 9.4Z" fill="#155fbf"/><path d="M1 5 Q3.6 0.4 9 1.4 Q5 1.6 2.6 5.4Z" fill="#52d878"/></svg>
<svg style="left:208.9px;top:511.2px;" width="14.4" height="14.4" viewBox="0 0 14.4 14.4"><circle cx="7.2" cy="7.2" r="6.9" fill="#e33b2e"/><path d="M7.2 7.2 L1.3 3.7 A6.9 6.9 0 0 0 7.8 14.05 Z" fill="#2da94f"/><path d="M7.2 7.2 L7.8 14.05 A6.9 6.9 0 0 0 13.2 3.8 Z" fill="#fcc31e"/><path d="M7.2 7.2 L13.2 3.8 A6.9 6.9 0 0 0 1.3 3.7Z" fill="#e33b2e"/><circle cx="7.2" cy="7.2" r="3.3" fill="#fff"/><circle cx="7.2" cy="7.2" r="2.6" fill="#4a8af4"/></svg>
<svg style="left:237.6px;top:512.4px;" width="15" height="12.6" viewBox="0 0 15 12.6"><path d="M0.4 0.2 H7.6 L14.4 6.2 L7.6 12.2 H0.4 L6.4 6.2 Z" fill="#c8c224"/><path d="M0.4 0.2 H7.6 L14.4 6.2 H6.4 Z" fill="#ece65a"/><path d="M6.4 6.2 H14.4 L7.6 12.2 H0.4Z" fill="#8f8a14"/></svg>
<svg style="left:266.4px;top:511px;" width="15" height="14" viewBox="0 0 15 14"><rect x="0.2" y="0.2" width="14" height="13.2" fill="#5d95d8"/><rect x="0.2" y="0.2" width="14" height="6" fill="#a6c8f0"/><path d="M1 9 L3 4 L5 8 L7 3 L9 7" fill="none" stroke="#e8f2ff" stroke-width="0.9"/><rect x="1" y="10" width="8" height="2.6" fill="#26406e"/><rect x="8" y="6.4" width="6.4" height="7" fill="#6d7684" stroke="#2c3442" stroke-width="0.6"/><circle cx="11.2" cy="9.8" r="1.6" fill="#d6dbe2"/></svg>
<svg style="left:294.6px;top:510.6px;" width="15" height="15.5" viewBox="0 0 15 15.5"><path d="M7.4 1.4 A6 6 0 1 1 3.4 11.6" fill="none" stroke="#e23a1c" stroke-width="2.2"/><path d="M6.8 0.8 L7.8 9.4 L5.6 9.6 Z" fill="#f2f2f2"/><path d="M7.8 9.4 L6 1 L8 0.8Z" fill="#cfd6dc"/><circle cx="4.2" cy="11.6" r="1.7" fill="none" stroke="#2f8fe8" stroke-width="1.1"/><circle cx="9.6" cy="12.6" r="1.7" fill="none" stroke="#2f8fe8" stroke-width="1.1"/><path d="M5.4 10.4 L8.4 11.6" stroke="#2f8fe8" stroke-width="1"/></svg>
<svg style="left:736.6px;top:515.4px;" width="8" height="6" viewBox="0 0 8 6"><path d="M0.6 5 L4 1.2 L7.4 5" fill="none" stroke="#fff" stroke-width="1"/></svg>
<svg style="left:749px;top:513.6px;" width="11" height="10" viewBox="0 0 11 10"><rect x="2.6" y="0.8" width="7.6" height="5.8" fill="none" stroke="#fff" stroke-width="0.9"/><path d="M4 8.8 H9 M6.4 6.6 V8.8" stroke="#fff" stroke-width="0.9"/><rect x="0.2" y="0.4" width="3.4" height="4" fill="#1c2a42" stroke="#fff" stroke-width="0.7"/><path d="M1 1.8 H2.8 M1 3 H2.8" stroke="#fff" stroke-width="0.4"/></svg>
<svg style="left:762.6px;top:513.4px;" width="12" height="10.6" viewBox="0 0 12 10.6"><path d="M0.6 3.6 H2.4 L4.8 1.2 V8.8 L2.4 6.4 H0.6 Z" fill="none" stroke="#fff" stroke-width="0.8" stroke-linejoin="round"/><circle cx="8" cy="7.6" r="2.6" fill="#e62a2a"/><path d="M6.9 6.5 L9.1 8.7 M9.1 6.5 L6.9 8.7" stroke="#fff" stroke-width="0.8"/></svg>
<span class="t" style="left:788px;top:510.20px;font-size:7.1px;color:#fff;letter-spacing:-0.300px;transform-origin:0 0;transform:scaleX(0.9747);">16:20</span>
<span class="t" style="left:780px;top:521.00px;font-size:7.1px;color:#fff;letter-spacing:-0.167px;">16/11/2023</span>
<svg style="left:823.4px;top:513px;" width="11.5" height="11" viewBox="0 0 11.5 11"><path d="M0.8 0.6 H10.2 V7.2 H6.8 L5.4 9.4 L4.2 7.2 H0.8 Z" fill="none" stroke="#fff" stroke-width="0.95" stroke-linejoin="round"/></svg>
<div style="left:845.4px;top:506.3px;width:0.6px;height:23.7px;background:#5a6676;"></div>
</div></body></html>
